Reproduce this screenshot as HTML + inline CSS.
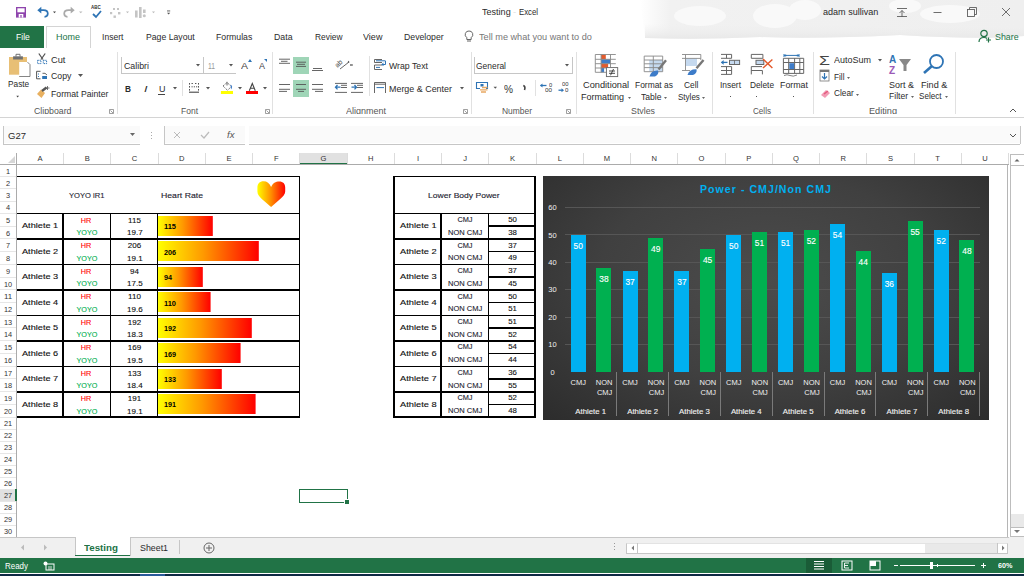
<!DOCTYPE html><html><head><meta charset="utf-8"><style>
*{margin:0;padding:0;box-sizing:border-box}
body{width:1024px;height:576px;overflow:hidden;background:#fff;position:relative;font-family:"Liberation Sans",sans-serif;color:#222}
.a{position:absolute}
.t{position:absolute;white-space:nowrap;line-height:1}
.k{-webkit-text-stroke:0.12px currentColor}
svg{position:absolute;overflow:visible}
</style></head><body>
<svg style="left:0;top:0" width="1024" height="48" viewBox="0 0 1024 48"><defs><linearGradient id="cg" x1="0" x2="1"><stop offset="0" stop-color="#fff"/><stop offset="0.08" stop-color="#f1f1f1"/><stop offset="1" stop-color="#efefef"/></linearGradient><linearGradient id="cg2" x1="0" x2="0" y1="0" y2="1"><stop offset="0" stop-color="#f0f0f0" stop-opacity="0"/><stop offset="1" stop-color="#e8e8e8"/></linearGradient></defs><path d="M640 0 H1024 V36 Q980 40 900 35 Q820 39 760 37 Q700 40 645 38 Z" fill="url(#cg)"/><path d="M645 24 Q700 22 760 27 Q840 22 900 30 Q960 24 1024 28 V36 Q980 40 900 35 Q820 39 760 37 Q700 40 645 38 Z" fill="url(#cg2)"/><g fill="#f9f9f9"><ellipse cx="700" cy="16" rx="26" ry="10"/><ellipse cx="775" cy="16" rx="22" ry="12"/><ellipse cx="805" cy="10" rx="16" ry="10"/><ellipse cx="950" cy="14" rx="30" ry="9"/><ellipse cx="905" cy="6" rx="16" ry="7"/></g></svg>
<svg style="left:0;top:0" width="100" height="26" viewBox="0 0 100 26"><rect x="16" y="7" width="10" height="10.6" fill="#8e44ad"/><rect x="17.4" y="8.3" width="7.2" height="4" fill="#fff"/><rect x="18.7" y="14" width="4.6" height="3.6" fill="#fff"/><rect x="20.4" y="15" width="1.2" height="2.6" fill="#8e44ad"/><path d="M40 10.2 H43.5 Q47.8 10.2 47.8 13.6 Q47.8 16.8 44.5 16.8" fill="none" stroke="#2e74b5" stroke-width="1.7"/><path d="M37.3 10.2 L41.3 6.8 V13.6Z" fill="#2e74b5"/><path d="M53 11.5 H56 L54.5 13.2Z" fill="#444"/><path d="M72 10.2 H68.5 Q64.2 10.2 64.2 13.6 Q64.2 16.8 67.5 16.8" fill="none" stroke="#aaa" stroke-width="1.7"/><path d="M74.7 10.2 L70.7 6.8 V13.6Z" fill="#aaa"/><path d="M79 11.5 H82.5 L80.75 13.2Z" fill="#bbb"/></svg>
<div class="t" id="t0" style="top:6.19px;font-size:4.5px;color:#333;font-weight:bold;left:91.00px;transform:scaleX(1.0000);transform-origin:0 0;">ABC</div>
<svg style="left:92px;top:10px" width="10" height="8" viewBox="0 0 10 8"><path d="M1 4 L4 7 L9 1" fill="none" stroke="#2e74b5" stroke-width="1.8"/></svg>
<svg style="left:0;top:0" width="200" height="26" viewBox="0 0 200 26"><g fill="#c4c4c4"><rect x="110" y="12" width="2.2" height="2.2"/><rect x="113" y="8" width="2" height="2"/><rect x="117" y="8" width="2" height="2"/><rect x="113.5" y="15.5" width="2.4" height="2.4"/><rect x="118" y="12" width="2.4" height="2.4"/></g><path d="M126 11.5h3l-1.5 1.7z" fill="#bbb"/><g fill="#c4c4c4"><rect x="135" y="10.5" width="2.6" height="7"/><rect x="139" y="7" width="2.6" height="11"/><rect x="143" y="9.5" width="2.6" height="3.5"/><circle cx="144.3" cy="15.8" r="1.5"/></g><path d="M152 11.5h3l-1.5 1.7z" fill="#bbb"/></svg>
<svg style="left:0;top:0" width="200" height="26" viewBox="0 0 200 26"><rect x="167" y="10.5" width="3.2" height="0.9" fill="#555"/><path d="M167 12.8h3.2l-1.6 1.8z" fill="#555"/></svg>
<div class="t" id="t1" style="top:6.94px;font-size:9.4px;color:#2b2b2b;font-weight:normal;left:482.00px;transform:scaleX(0.9662);transform-origin:0 0;">Testing</div>
<div class="t" id="t2" style="top:6.94px;font-size:9.4px;color:#e0e0e0;font-weight:normal;left:513.00px;transform:scaleX(1.0000);transform-origin:0 0;">-</div>
<div class="t" id="t3" style="top:6.94px;font-size:9.4px;color:#2b2b2b;font-weight:normal;left:519.40px;transform:scaleX(0.8327);transform-origin:0 0;">Excel</div>
<div class="t" id="t4" style="top:6.74px;font-size:9.4px;color:#2b2b2b;font-weight:normal;left:823.00px;transform:scaleX(0.9664);transform-origin:0 0;">adam sullivan</div>
<svg style="left:895px;top:5px" width="120" height="16" viewBox="0 0 120 16"><g stroke="#555" stroke-width="0.85" fill="none"><path d="M2 3.5 H12"/><path d="M7 12 V5.5 M4.5 8 L7 5.5 L9.5 8"/><path d="M2 11.5 H12"/><path d="M38.5 7.5 H46.5"/><rect x="72.5" y="4.5" width="7" height="7"/><path d="M74.5 4.5 V2.5 H81.5 V9.5 H79.5"/><path d="M107 3 L115 11 M115 3 L107 11"/></g></svg>
<div class="a" style="left:0.00px;top:26.00px;width:44.00px;height:21.50px;background:#217346;"></div>
<div class="t" id="t5" style="top:33.33px;font-size:9.3px;color:#fff;font-weight:normal;left:15.60px;transform:scaleX(0.9210);transform-origin:0 0;">File</div>
<div class="a" style="left:46.00px;top:26.00px;width:44.50px;height:22.00px;background:#fff;border:1px solid #d4d4d4;border-bottom:none"></div>
<div class="t" id="t6" style="top:32.63px;font-size:9.3px;color:#217346;font-weight:normal;left:56.00px;transform:scaleX(0.9673);transform-origin:0 0;">Home</div>
<div class="t" id="t7" style="top:32.63px;font-size:9.3px;color:#2b2b2b;font-weight:normal;left:102.30px;transform:scaleX(0.9198);transform-origin:0 0;">Insert</div>
<div class="t" id="t8" style="top:32.63px;font-size:9.3px;color:#2b2b2b;font-weight:normal;left:145.50px;transform:scaleX(0.9326);transform-origin:0 0;">Page Layout</div>
<div class="t" id="t9" style="top:32.63px;font-size:9.3px;color:#2b2b2b;font-weight:normal;left:216.30px;transform:scaleX(0.9368);transform-origin:0 0;">Formulas</div>
<div class="t" id="t10" style="top:32.63px;font-size:9.3px;color:#2b2b2b;font-weight:normal;left:274.20px;transform:scaleX(0.9419);transform-origin:0 0;">Data</div>
<div class="t" id="t11" style="top:32.63px;font-size:9.3px;color:#2b2b2b;font-weight:normal;left:314.70px;transform:scaleX(0.9021);transform-origin:0 0;">Review</div>
<div class="t" id="t12" style="top:32.63px;font-size:9.3px;color:#2b2b2b;font-weight:normal;left:363.40px;transform:scaleX(0.9708);transform-origin:0 0;">View</div>
<div class="t" id="t13" style="top:32.63px;font-size:9.3px;color:#2b2b2b;font-weight:normal;left:404.00px;transform:scaleX(0.9365);transform-origin:0 0;">Developer</div>
<svg style="left:464px;top:30px" width="10" height="13" viewBox="0 0 10 13"><path d="M5 1 A3.6 3.6 0 0 1 7.2 7.6 V9.5 H2.8 V7.6 A3.6 3.6 0 0 1 5 1Z" fill="none" stroke="#555" stroke-width="0.9"/><path d="M3 11 H7" stroke="#555" stroke-width="0.9"/></svg>
<div class="t" id="t14" style="top:32.63px;font-size:9.3px;color:#777;font-weight:normal;left:478.70px;transform:scaleX(0.9840);transform-origin:0 0;">Tell me what you want to do</div>
<svg style="left:978px;top:29px" width="14" height="14" viewBox="0 0 14 14"><circle cx="6" cy="4.5" r="3.2" fill="none" stroke="#217346" stroke-width="1.2"/><path d="M1 13 Q1 8.5 6 8.5 Q8 8.5 9 9.5" fill="none" stroke="#217346" stroke-width="1.2"/><path d="M10.5 8.5 V13.5 M8 11 H13" stroke="#217346" stroke-width="1.2"/></svg>
<div class="t" id="t15" style="top:33.43px;font-size:9.3px;color:#217346;font-weight:normal;left:994.80px;transform:scaleX(0.9511);transform-origin:0 0;">Share</div>
<div class="a" style="left:0.00px;top:117.00px;width:1024.00px;height:1.00px;background:#d4d4d4;"></div>
<div class="a" style="left:117.30px;top:51.50px;width:1.00px;height:62.50px;background:#e1e1e1;"></div>
<div class="a" style="left:272.20px;top:51.50px;width:1.00px;height:62.50px;background:#e1e1e1;"></div>
<div class="a" style="left:470.50px;top:51.50px;width:1.00px;height:62.50px;background:#e1e1e1;"></div>
<div class="a" style="left:576.00px;top:51.50px;width:1.00px;height:62.50px;background:#e1e1e1;"></div>
<div class="a" style="left:712.00px;top:51.50px;width:1.00px;height:62.50px;background:#e1e1e1;"></div>
<div class="a" style="left:813.00px;top:51.50px;width:1.00px;height:62.50px;background:#e1e1e1;"></div>
<div class="a" style="left:955.00px;top:51.50px;width:1.00px;height:62.50px;background:#e1e1e1;"></div>
<svg style="left:0;top:0" width="40" height="100" viewBox="0 0 40 100"><rect x="9" y="57" width="18" height="17.7" fill="#e8bf75"/><rect x="13.1" y="56.3" width="9.8" height="3.2" fill="#707070"/><path d="M16 56.5 V54.3 H20 V56.5" fill="none" stroke="#707070" stroke-width="1"/><path d="M19.2 62.1 H27.5 L30 64.6 V76.5 H19.2Z" fill="#fff"/><path d="M27.5 62.1 L30 64.6 V76.5 H19.2" fill="none" stroke="#666" stroke-width="0.8"/></svg>
<div class="t" id="t16" style="top:80.42px;font-size:8.6px;color:#2b2b2b;font-weight:normal;left:7.80px;transform:scaleX(0.9643);transform-origin:0 0;">Paste</div>
<svg style="left:0;top:0" width="40" height="100" viewBox="0 0 40 100"><path d="M16.3 95.8 H19 L17.65 97.6Z" fill="#444"/></svg>
<svg style="left:0;top:0" width="60" height="110" viewBox="0 0 60 110"><path d="M38.8 53.5 L43 59.5 M45.2 53.5 L41 59.5" fill="none" stroke="#555" stroke-width="1.3"/><g fill="none" stroke="#2e74b5" stroke-width="1" stroke-dasharray="1.2 0.8"><rect x="37.6" y="60.3" width="3.3" height="3.3"/><rect x="43.3" y="60.3" width="3.3" height="3.3"/></g><path d="M40.5 71.3 H36.6 V78.8 H40.5" fill="none" stroke="#555" stroke-width="1"/><path d="M38 74H39M38 76.5H39" stroke="#2e74b5" stroke-width="1"/><path d="M42.5 73.3 H45 L47 75" fill="none" stroke="#555" stroke-width="0.9"/><rect x="42.2" y="76" width="4.8" height="3" fill="#2e74b5"/><path d="M37 94 L41 89.5 L45 93 L41.5 98 Z" fill="#e8b060"/><path d="M42 91 L46.5 87.5" stroke="#555" stroke-width="2.4"/><path d="M47.5 86V90M45.5 88H49.5" stroke="#555" stroke-width="0.8"/></svg>
<div class="t" id="t17" style="top:56.02px;font-size:8.6px;color:#2b2b2b;font-weight:normal;left:50.60px;transform:scaleX(1.0766);transform-origin:0 0;">Cut</div>
<div class="t" id="t18" style="top:71.72px;font-size:8.6px;color:#2b2b2b;font-weight:normal;left:50.60px;transform:scaleX(1.0168);transform-origin:0 0;">Copy</div>
<svg style="left:78px;top:74px" width="5" height="3" viewBox="0 0 5 3"><path d="M0 0 H5 L2.5 3Z" fill="#555"/></svg>
<div class="t" id="t19" style="top:89.92px;font-size:8.6px;color:#2b2b2b;font-weight:normal;left:50.60px;transform:scaleX(1.0098);transform-origin:0 0;">Format Painter</div>
<div class="t" id="t20" style="top:106.92px;font-size:8.6px;color:#555;font-weight:normal;left:33.50px;transform:scaleX(1.0191);transform-origin:0 0;">Clipboard</div>
<svg style="left:109px;top:109px" width="5" height="5" viewBox="0 0 5 5"><path d="M0.5 0.5 H4.5 V4.5 H0.5Z M1.5 1.5 L4 4" fill="none" stroke="#777" stroke-width="0.7"/></svg>
<div class="a" style="left:121.00px;top:57.30px;width:1.00px;height:16.00px;background:#c6c6c6;"></div>
<div class="a" style="left:121.00px;top:72.50px;width:115.00px;height:1.00px;background:#c6c6c6;"></div>
<div class="a" style="left:203.00px;top:57.30px;width:1.00px;height:16.00px;background:#c6c6c6;"></div>
<div class="t" id="t21" style="top:61.92px;font-size:8.6px;color:#2b2b2b;font-weight:normal;left:124.00px;transform:scaleX(1.0263);transform-origin:0 0;">Calibri</div>
<div class="t" id="t22" style="top:61.92px;font-size:8.6px;color:#999;font-weight:normal;left:208.00px;transform:scaleX(0.7846);transform-origin:0 0;">11</div>
<svg style="left:196px;top:64px" width="4" height="3" viewBox="0 0 4 3"><path d="M0 0 H4 L2 2.5Z" fill="#555"/></svg>
<svg style="left:229px;top:64px" width="4" height="3" viewBox="0 0 4 3"><path d="M0 0 H4 L2 2.5Z" fill="#555"/></svg>
<div class="t" id="t23" style="top:61.46px;font-size:9.5px;color:#444;font-weight:normal;left:241.00px;transform:scaleX(1.1034);transform-origin:0 0;">A</div>
<svg style="left:248px;top:59px" width="4" height="3" viewBox="0 0 4 3"><path d="M0 3 H4 L2 0Z" fill="#2e74b5"/></svg>
<div class="t" id="t24" style="top:62.30px;font-size:8.5px;color:#444;font-weight:normal;left:259.00px;transform:scaleX(1.0579);transform-origin:0 0;">A</div>
<svg style="left:264px;top:59px" width="4" height="3" viewBox="0 0 4 3"><path d="M0 0 L3 0 L3 3Z" fill="#2e74b5"/></svg>
<div class="t" id="t25" style="top:85.02px;font-size:8.6px;color:#2b2b2b;font-weight:bold;left:125.00px;transform:scaleX(0.9648);transform-origin:0 0;">B</div>
<div class="t" id="t26" style="top:85.02px;font-size:8.6px;color:#2b2b2b;font-weight:normal;left:143.50px;transform:scaleX(1.4641);transform-origin:0 0;font-style:italic;">I</div>
<div class="t" id="t27" style="top:85.02px;font-size:8.6px;color:#2b2b2b;font-weight:normal;left:158.50px;transform:scaleX(1.0452);transform-origin:0 0;">U</div>
<div class="a" style="left:158.00px;top:94.00px;width:7.00px;height:0.80px;background:#444;"></div>
<div class="a" style="left:182.00px;top:80.00px;width:1.00px;height:16.00px;background:#e1e1e1;"></div>
<svg style="left:0;top:0" width="1024" height="120" viewBox="0 0 1024 120"><g fill="#555"><rect x="189" y="83" width="1" height="1.6"/><rect x="189" y="86" width="1" height="1.6"/><rect x="189" y="89" width="1" height="1.6"/><rect x="198" y="83" width="1" height="1.6"/><rect x="198" y="86" width="1" height="1.6"/><rect x="198" y="89" width="1" height="1.6"/><rect x="191.5" y="83" width="1.4" height="1"/><rect x="195" y="83" width="1.4" height="1"/><rect x="191.5" y="86.3" width="1.2" height="1"/><rect x="193.8" y="86.3" width="1.2" height="1"/><rect x="196" y="86.3" width="1.2" height="1"/></g><path d="M189 92.2H199" stroke="#444" stroke-width="1.1"/><path d="M223 86 L227 82.5 L231.5 86.5 L227.5 90.3Z" fill="none" stroke="#666" stroke-width="0.9" stroke-dasharray="1.4 0.8"/><path d="M227 81.8 V85.5" stroke="#555" stroke-width="0.9"/><path d="M230.5 84.5 Q233.5 86.5 231 89.5Z" fill="#3d7cc9"/><rect x="220.9" y="91" width="12.1" height="3" fill="#ffff00"/><path d="M249.3 90.8 L252.3 83.5 L255.3 90.8 M250.3 88.3H254.3" fill="none" stroke="#444" stroke-width="1.1"/><rect x="246" y="91" width="12" height="3" fill="#ff0000"/></svg>
<svg style="left:172.5px;top:87px" width="4" height="3" viewBox="0 0 4 3"><path d="M0 0 H4 L2 2.5Z" fill="#555"/></svg>
<svg style="left:205.5px;top:87px" width="4" height="3" viewBox="0 0 4 3"><path d="M0 0 H4 L2 2.5Z" fill="#555"/></svg>
<svg style="left:237.5px;top:87px" width="4" height="3" viewBox="0 0 4 3"><path d="M0 0 H4 L2 2.5Z" fill="#555"/></svg>
<svg style="left:262.5px;top:87px" width="4" height="3" viewBox="0 0 4 3"><path d="M0 0 H4 L2 2.5Z" fill="#555"/></svg>
<div class="t" id="t28" style="top:106.92px;font-size:8.6px;color:#555;font-weight:normal;left:181.00px;transform:scaleX(0.9882);transform-origin:0 0;">Font</div>
<svg style="left:265px;top:109px" width="5" height="5" viewBox="0 0 5 5"><path d="M0.5 0.5 H4.5 V4.5 H0.5Z M1.5 1.5 L4 4" fill="none" stroke="#777" stroke-width="0.7"/></svg>
<div class="a" style="left:293.10px;top:57.10px;width:15.80px;height:16.70px;background:#9fd5b7;"></div>
<div class="a" style="left:293.10px;top:80.00px;width:15.80px;height:17.00px;background:#9fd5b7;"></div>
<svg style="left:0;top:0" width="1024" height="120" viewBox="0 0 1024 120"><g stroke="#555" stroke-width="0.9" fill="none"><path d="M279 59.2H290M281 61.3H287.5M279 63.3H290"/><path d="M296 62.2H306M297 64.3H305M296 66.4H306"/><path d="M313 68.5H322M312 70.5H323"/><path d="M279 84.5H290M279 89.3H290M279 91.4H287"/><path d="M296 84.5H306M296 89.3H306M298 91.4H304"/><path d="M312 84.5H323M312 89.3H323M315 91.4H323"/><path d="M335 83.4H347M341 85.3H347M341 87.5H347M335 92.4H347"/><path d="M351 83.4H363M357 85.3H363M357 87.5H363M351 92.4H363"/><path d="M340 69 L349 62 M348 61 l1.2 1 l-1.5 0.3"/></g><text x="0" y="0" transform="translate(337.5 68) rotate(-45)" font-family="Liberation Sans" font-size="7" fill="#444">ab</text><g stroke="#2e74b5" stroke-width="1.3" fill="none"><path d="M335.5 87.2H340.5M337.5 85 L335.5 87.2 L337.5 89.4"/><path d="M351.5 87.2H356.5M354.5 85 L356.5 87.2 L354.5 89.4"/></g><path d="M350 65 H352.8" stroke="#555" stroke-width="1.3"/></svg>
<div class="a" style="left:368.50px;top:56.00px;width:1.00px;height:40.00px;background:#e1e1e1;"></div>
<svg style="left:0;top:0" width="1024" height="120" viewBox="0 0 1024 120"><g fill="none" stroke="#555" stroke-width="0.9"><path d="M382 59.5H374.5V62.5H382M382 65H374.5V69.5H382"/><path d="M374.5 93V82.5H385.5V93M374.5 84.2H385.5"/></g><g fill="none" stroke="#2e74b5" stroke-width="1"><path d="M376 60.8H385.5M376 67.4H380M385.5 61 V64.5 H382 M383.5 62.8 L382 64.5 L383.5 66"/><path d="M376.5 87.6H384"/></g></svg>
<div class="t" id="t29" style="top:61.92px;font-size:8.6px;color:#2b2b2b;font-weight:normal;left:389.00px;transform:scaleX(1.0163);transform-origin:0 0;">Wrap Text</div>
<div class="t" id="t30" style="top:84.92px;font-size:8.6px;color:#2b2b2b;font-weight:normal;left:389.00px;transform:scaleX(1.0384);transform-origin:0 0;">Merge &amp; Center</div>
<svg style="left:460px;top:87px" width="4" height="3" viewBox="0 0 4 3"><path d="M0 0 H4 L2 2.5Z" fill="#555"/></svg>
<div class="t" id="t31" style="top:106.92px;font-size:8.6px;color:#555;font-weight:normal;left:346.00px;transform:scaleX(1.0466);transform-origin:0 0;">Alignment</div>
<svg style="left:463px;top:109px" width="5" height="5" viewBox="0 0 5 5"><path d="M0.5 0.5 H4.5 V4.5 H0.5Z M1.5 1.5 L4 4" fill="none" stroke="#777" stroke-width="0.7"/></svg>
<div class="a" style="left:474.00px;top:57.20px;width:1.00px;height:16.00px;background:#c6c6c6;"></div>
<div class="a" style="left:474.00px;top:72.50px;width:98.50px;height:1.00px;background:#c6c6c6;"></div>
<div class="a" style="left:572.00px;top:57.20px;width:1.00px;height:16.00px;background:#c6c6c6;"></div>
<div class="t" id="t32" style="top:61.92px;font-size:8.6px;color:#2b2b2b;font-weight:normal;left:476.00px;transform:scaleX(0.9811);transform-origin:0 0;">General</div>
<svg style="left:565px;top:64px" width="4" height="3" viewBox="0 0 4 3"><path d="M0 0 H4 L2 2.5Z" fill="#555"/></svg>
<svg style="left:0;top:0" width="1024" height="120" viewBox="0 0 1024 120"><path d="M478 82.5 H476.5 V88.5 H478 M486 82.5 H487.5 V88.5 H486" fill="none" stroke="#2e74b5" stroke-width="1.1"/><path d="M478 82.5H486M478 88.5H480" stroke="#2e74b5" stroke-width="1.1"/><rect x="480.5" y="84" width="3" height="2.5" fill="#2e74b5"/><path d="M482 87.5H487.5M480 89.8H487.5M481 92H486" stroke="#e8a862" stroke-width="1.3"/><path d="M493.5 86.8H497L495.25 88.8Z" fill="#555"/><path d="M523.3 85.5 Q525.8 86.5 524.5 90" fill="none" stroke="#444" stroke-width="1.6"/><path d="M540.5 85.5H546.5" stroke="#2e74b5" stroke-width="1.3"/><path d="M540 85.5L542.5 83.5V87.5Z" fill="#2e74b5"/><path d="M558.5 90.2H562.5" stroke="#2e74b5" stroke-width="1.3"/><path d="M564 90.2L561.5 88.2V92.2Z" fill="#2e74b5"/></svg>
<div class="t" id="t33" style="top:83.71px;font-size:10.5px;color:#333;font-weight:normal;left:503.70px;transform:scaleX(0.9632);transform-origin:0 0;">%</div>
<div class="a" style="left:535.40px;top:80.00px;width:1.00px;height:16.00px;background:#e1e1e1;"></div>
<div class="t" id="t34" style="top:83.46px;font-size:5.6px;color:#333;font-weight:normal;left:548.60px;transform:scaleX(1.0240);transform-origin:0 0;">0</div>
<div class="t" id="t35" style="top:87.96px;font-size:5.6px;color:#333;font-weight:normal;left:545.00px;transform:scaleX(1.1228);transform-origin:0 0;">00</div>
<div class="t" id="t36" style="top:82.46px;font-size:5.6px;color:#333;font-weight:normal;left:561.80px;transform:scaleX(1.0426);transform-origin:0 0;">00</div>
<div class="t" id="t37" style="top:87.76px;font-size:5.6px;color:#333;font-weight:normal;left:564.50px;transform:scaleX(1.0880);transform-origin:0 0;">0</div>
<div class="t" id="t38" style="top:106.92px;font-size:8.6px;color:#555;font-weight:normal;left:502.00px;transform:scaleX(0.9811);transform-origin:0 0;">Number</div>
<svg style="left:566px;top:109px" width="5" height="5" viewBox="0 0 5 5"><path d="M0.5 0.5 H4.5 V4.5 H0.5Z M1.5 1.5 L4 4" fill="none" stroke="#777" stroke-width="0.7"/></svg>
<svg style="left:0;top:0" width="1024" height="120" viewBox="0 0 1024 120"><rect x="601.1" y="54.5" width="4.7" height="4.7" fill="#e35b2e"/><rect x="601.1" y="59.3" width="9" height="4.4" fill="#3d7cc9"/><rect x="601.1" y="63.7" width="7" height="4.3" fill="#e35b2e"/><rect x="601.1" y="68" width="3" height="4.3" fill="#3d7cc9"/><g fill="none" stroke="#888" stroke-width="0.9"><path d="M615.8 54.5H595.3V72.3H606M595.3 59.3H615.8M595.3 63.7H615.8M595.3 68H606M601.1 54.5V72.3M610.5 54.5V67"/></g><rect x="606.4" y="67.6" width="11.3" height="9" fill="#fff" stroke="#666" stroke-width="0.9"/><path d="M609 71H615M609 73.3H615M613.5 69L610.5 75.3" stroke="#333" stroke-width="0.9"/><rect x="649.2" y="60" width="13.5" height="11.7" fill="#c5d9ef"/><g fill="none" stroke="#888" stroke-width="0.9"><path d="M644.2 56.1H662.7V71.7H644.2ZM653.3 56.1V71.7M644.2 60H662.7M644.2 63.8H662.7M644.2 67.6H662.7"/></g><path d="M666 60.3 L658.5 69.5" stroke="#777" stroke-width="2.4"/><path d="M649.5 76.5 Q651 70 658 70.5 Q659.5 74 655 76.5Z" fill="#3d7cc9"/><rect x="685.5" y="58.4" width="11.5" height="7.6" fill="#c5d9ef"/><g fill="none" stroke="#888" stroke-width="0.9"><path d="M682 54.5H700.8M682 58.4H700.8M685.5 54.5V70.5M682 70.5H690M700.8 54.5V60"/></g><path d="M703.5 60 L696.5 68.3" stroke="#777" stroke-width="2.4"/><path d="M687.5 75 Q689 69 696.5 69.2 Q697.5 73 693 75Z" fill="#3d7cc9"/></svg>
<div class="t" id="t39" style="top:80.72px;font-size:8.6px;color:#2b2b2b;font-weight:normal;left:582.90px;transform:scaleX(1.0721);transform-origin:0 0;">Conditional</div>
<div class="t" id="t40" style="top:92.62px;font-size:8.6px;color:#2b2b2b;font-weight:normal;left:581.20px;transform:scaleX(1.0468);transform-origin:0 0;">Formatting</div>
<svg style="left:627.5px;top:96.5px" width="3" height="2" viewBox="0 0 3 2"><path d="M0 0 H3 L1.5 2Z" fill="#666"/></svg>
<div class="t" id="t41" style="top:80.72px;font-size:8.6px;color:#2b2b2b;font-weight:normal;left:634.90px;transform:scaleX(0.9796);transform-origin:0 0;">Format as</div>
<div class="t" id="t42" style="top:92.62px;font-size:8.6px;color:#2b2b2b;font-weight:normal;left:640.70px;transform:scaleX(0.9977);transform-origin:0 0;">Table</div>
<svg style="left:664px;top:96.5px" width="3" height="2" viewBox="0 0 3 2"><path d="M0 0 H3 L1.5 2Z" fill="#666"/></svg>
<div class="t" id="t43" style="top:80.72px;font-size:8.6px;color:#2b2b2b;font-weight:normal;left:684.40px;transform:scaleX(0.9722);transform-origin:0 0;">Cell</div>
<div class="t" id="t44" style="top:92.62px;font-size:8.6px;color:#2b2b2b;font-weight:normal;left:677.60px;transform:scaleX(0.9356);transform-origin:0 0;">Styles</div>
<svg style="left:702.3px;top:96.5px" width="3" height="2" viewBox="0 0 3 2"><path d="M0 0 H3 L1.5 2Z" fill="#666"/></svg>
<div class="t" id="t45" style="top:106.92px;font-size:8.6px;color:#555;font-weight:normal;left:631.00px;transform:scaleX(1.0254);transform-origin:0 0;">Styles</div>
<svg style="left:0;top:0" width="1024" height="120" viewBox="0 0 1024 120"><g fill="none" stroke="#666" stroke-width="1"><path d="M721 54.4H731.6V58.3H721M726.5 54.4V58.3"/><path d="M721 66.6H731.6M721 70.5H731.6M721 74.4H731.6M726.5 66.6V74.4M731.6 66.6V74.4"/><path d="M751.3 54.4H762.9V58.3H751.3Z"/><path d="M751.3 66.6H762M751.3 70.5H762.4M751.3 66.6V74.4M762.4 70.5V74.4"/><path d="M783.4 58.3H803.7V73.4H783.4ZM788.7 58.3V73.4M794.6 58.3V73.4M799.8 58.3V73.4M783.4 62.5H803.7M783.4 69.5H803.7"/><path d="M784 75.5 Q787 74 790 75.5 Q793 77 797 75" stroke-width="0.8"/></g><rect x="729.5" y="60.3" width="10.1" height="4.2" fill="#c5d9ef" stroke="#666" stroke-width="1"/><path d="M734.5 60.3V64.5" stroke="#666" stroke-width="0.8"/><path d="M721.5 62.4H727.5" stroke="#2e74b5" stroke-width="1.3"/><path d="M720.8 62.4L723.6 60V64.8Z" fill="#2e74b5"/><rect x="756" y="60.3" width="7.8" height="4.2" fill="#c5d9ef" stroke="#666" stroke-width="1"/><path d="M763 59 L772.4 68 M772.4 59.5 L763 68" stroke="#e35b2e" stroke-width="1.5"/><rect x="789.3" y="63.2" width="4.8" height="5.8" fill="#3d7cc9"/><path d="M784 55.4H799M784 54V57M799 54V57" stroke="#2e74b5" stroke-width="1"/><circle cx="785.5" cy="55.4" r="1" fill="#2e74b5"/><circle cx="797.5" cy="55.4" r="1" fill="#2e74b5"/></svg>
<div class="t" id="t46" style="top:80.72px;font-size:8.6px;color:#2b2b2b;font-weight:normal;left:720.00px;transform:scaleX(0.9767);transform-origin:0 0;">Insert</div>
<div class="t" id="t47" style="top:80.72px;font-size:8.6px;color:#2b2b2b;font-weight:normal;left:750.00px;transform:scaleX(0.9660);transform-origin:0 0;">Delete</div>
<div class="t" id="t48" style="top:80.72px;font-size:8.6px;color:#2b2b2b;font-weight:normal;left:780.00px;transform:scaleX(1.0287);transform-origin:0 0;">Format</div>
<div class="a" style="left:729.50px;top:96.00px;width:1.20px;height:1.20px;background:#555;"></div>
<div class="a" style="left:756.00px;top:96.00px;width:1.20px;height:1.20px;background:#555;"></div>
<div class="a" style="left:793.00px;top:96.00px;width:1.20px;height:1.20px;background:#555;"></div>
<div class="t" id="t49" style="top:106.92px;font-size:8.6px;color:#555;font-weight:normal;left:753.00px;transform:scaleX(0.9419);transform-origin:0 0;">Cells</div>
<div class="t" id="t50" style="top:53.50px;font-size:13px;color:#444;font-weight:normal;left:819.00px;transform:scaleX(1.3670);transform-origin:0 0;">&Sigma;</div>
<div class="t" id="t51" style="top:55.92px;font-size:8.6px;color:#2b2b2b;font-weight:normal;left:833.50px;transform:scaleX(1.0436);transform-origin:0 0;">AutoSum</div>
<svg style="left:878px;top:59px" width="4" height="3" viewBox="0 0 4 3"><path d="M0 0 H4 L2 2.5Z" fill="#555"/></svg>
<svg style="left:819px;top:69px" width="12" height="13" viewBox="0 0 12 13"><rect x="1" y="1" width="9" height="11" fill="none" stroke="#777" stroke-width="0.8"/><rect x="1" y="1" width="9" height="2" fill="#777"/><path d="M5.5 4V10M3 7.5L5.5 10L8 7.5" fill="none" stroke="#2e74b5" stroke-width="1.2"/></svg>
<div class="t" id="t52" style="top:72.52px;font-size:8.6px;color:#2b2b2b;font-weight:normal;left:833.90px;transform:scaleX(0.9559);transform-origin:0 0;">Fill</div>
<svg style="left:847px;top:76.5px" width="3" height="2" viewBox="0 0 3 2"><path d="M0 0 H3 L1.5 2Z" fill="#666"/></svg>
<svg style="left:820px;top:88px" width="11" height="10" viewBox="0 0 11 10"><path d="M1 7 L6 2 L10 5 L5 10Z" fill="#f29bb4"/><path d="M4 6 L8 3" stroke="#e35b7e" stroke-width="1.5"/></svg>
<div class="t" id="t53" style="top:89.22px;font-size:8.6px;color:#2b2b2b;font-weight:normal;left:833.50px;transform:scaleX(0.9637);transform-origin:0 0;">Clear</div>
<svg style="left:856px;top:93.5px" width="3" height="2" viewBox="0 0 3 2"><path d="M0 0 H3 L1.5 2Z" fill="#666"/></svg>
<svg style="left:889px;top:54px" width="26" height="22" viewBox="0 0 26 22"><text x="0" y="9" font-family="Liberation Sans" font-size="10" fill="#2e74b5" font-weight="bold">A</text><text x="0" y="20" font-family="Liberation Sans" font-size="10" fill="#9b59b6" font-weight="bold">Z</text><path d="M10 5 H22 L17.5 11 V17 H14.5 V11Z" fill="#888"/></svg>
<div class="t" id="t54" style="top:80.52px;font-size:8.6px;color:#2b2b2b;font-weight:normal;left:888.90px;transform:scaleX(1.0422);transform-origin:0 0;">Sort &amp;</div>
<div class="t" id="t55" style="top:92.32px;font-size:8.6px;color:#2b2b2b;font-weight:normal;left:888.90px;transform:scaleX(0.9995);transform-origin:0 0;">Filter</div>
<svg style="left:911px;top:96.3px" width="3" height="2" viewBox="0 0 3 2"><path d="M0 0 H3 L1.5 2Z" fill="#666"/></svg>
<svg style="left:922px;top:53px" width="24" height="22" viewBox="0 0 24 22"><circle cx="14.5" cy="8.5" r="6.5" fill="none" stroke="#2e74b5" stroke-width="1.8"/><path d="M10 13 L2 20" stroke="#2e74b5" stroke-width="2.6"/></svg>
<div class="t" id="t56" style="top:80.52px;font-size:8.6px;color:#2b2b2b;font-weight:normal;left:920.60px;transform:scaleX(1.0626);transform-origin:0 0;">Find &amp;</div>
<div class="t" id="t57" style="top:92.32px;font-size:8.6px;color:#2b2b2b;font-weight:normal;left:919.00px;transform:scaleX(0.9418);transform-origin:0 0;">Select</div>
<svg style="left:945px;top:96.3px" width="3" height="2" viewBox="0 0 3 2"><path d="M0 0 H3 L1.5 2Z" fill="#666"/></svg>
<div class="t" id="t58" style="top:106.92px;font-size:8.6px;color:#555;font-weight:normal;left:869.00px;transform:scaleX(1.0654);transform-origin:0 0;">Editing</div>
<svg style="left:1009px;top:108px" width="8" height="5" viewBox="0 0 8 5"><path d="M1 4 L4 1 L7 4" fill="none" stroke="#555" stroke-width="1"/></svg>
<div class="a" style="left:0.00px;top:114.40px;width:1024.00px;height:2.60px;background:#fff;"></div>
<div class="a" style="left:4.00px;top:126.20px;width:136.00px;height:17.30px;background:#fafafa;"></div>
<div class="a" style="left:164.50px;top:126.20px;width:80.00px;height:17.30px;background:#fafafa;"></div>
<div class="a" style="left:249.00px;top:126.20px;width:770.50px;height:17.30px;background:#fafafa;"></div>
<div class="a" style="left:3.00px;top:126.20px;width:1.00px;height:18.00px;background:#c6c6c6;"></div>
<div class="a" style="left:3.00px;top:143.50px;width:137.00px;height:1.00px;background:#c6c6c6;"></div>
<div class="t" id="t59" style="top:131.72px;font-size:8.6px;color:#2b2b2b;font-weight:normal;left:8.00px;transform:scaleX(1.1077);transform-origin:0 0;">G27</div>
<svg style="left:130px;top:133px" width="5" height="3" viewBox="0 0 5 3"><path d="M0 0 H5 L2.5 3Z" fill="#666"/></svg>
<div class="a" style="left:151.00px;top:132.00px;width:1.00px;height:1.00px;background:#aaa;"></div>
<div class="a" style="left:151.00px;top:135.00px;width:1.00px;height:1.00px;background:#aaa;"></div>
<div class="a" style="left:151.00px;top:138.00px;width:1.00px;height:1.00px;background:#aaa;"></div>
<div class="a" style="left:163.50px;top:126.20px;width:1.00px;height:18.00px;background:#c6c6c6;"></div>
<div class="a" style="left:163.50px;top:143.50px;width:81.00px;height:1.00px;background:#c6c6c6;"></div>
<svg style="left:173px;top:131px" width="64" height="10" viewBox="0 0 64 10"><path d="M1 1 L7 7 M7 1 L1 7" stroke="#bbb" stroke-width="1"/><path d="M28 4 L31 7 L36 1" fill="none" stroke="#bbb" stroke-width="1.2"/></svg>
<div class="t" id="t60" style="top:131.38px;font-size:9px;color:#555;font-weight:normal;left:227.00px;transform:scaleX(1.0690);transform-origin:0 0;font-family:"Liberation Serif",serif;"><i>fx</i></div>
<div class="a" style="left:248.50px;top:143.50px;width:771.00px;height:1.00px;background:#c6c6c6;"></div>
<div class="a" style="left:1019.50px;top:126.20px;width:1.00px;height:18.00px;background:#c6c6c6;"></div>
<svg style="left:1009px;top:133px" width="8" height="5" viewBox="0 0 8 5"><path d="M1 1 L4 4 L7 1" fill="none" stroke="#555" stroke-width="1"/></svg>
<div class="a" style="left:299.94px;top:153.00px;width:47.24px;height:11.50px;background:#e1e1e1;"></div>
<div class="a" style="left:63.24px;top:153.00px;width:1.00px;height:11.50px;background:#dcdcdc;"></div>
<div class="t" style="top:155.17px;font-size:7.6px;color:#333;font-weight:normal;left:40.12px;"><span id="t61" style="display:inline-block;transform:scaleX(1.0000) translateX(-50%);transform-origin:0 0">A</span></div>
<div class="a" style="left:110.48px;top:153.00px;width:1.00px;height:11.50px;background:#dcdcdc;"></div>
<div class="t" style="top:155.17px;font-size:7.6px;color:#333;font-weight:normal;left:87.36px;"><span id="t62" style="display:inline-block;transform:scaleX(1.0000) translateX(-50%);transform-origin:0 0">B</span></div>
<div class="a" style="left:157.72px;top:153.00px;width:1.00px;height:11.50px;background:#dcdcdc;"></div>
<div class="t" style="top:155.17px;font-size:7.6px;color:#333;font-weight:normal;left:134.60px;"><span id="t63" style="display:inline-block;transform:scaleX(1.0000) translateX(-50%);transform-origin:0 0">C</span></div>
<div class="a" style="left:204.96px;top:153.00px;width:1.00px;height:11.50px;background:#dcdcdc;"></div>
<div class="t" style="top:155.17px;font-size:7.6px;color:#333;font-weight:normal;left:181.84px;"><span id="t64" style="display:inline-block;transform:scaleX(1.0000) translateX(-50%);transform-origin:0 0">D</span></div>
<div class="a" style="left:252.20px;top:153.00px;width:1.00px;height:11.50px;background:#dcdcdc;"></div>
<div class="t" style="top:155.17px;font-size:7.6px;color:#333;font-weight:normal;left:229.08px;"><span id="t65" style="display:inline-block;transform:scaleX(1.0000) translateX(-50%);transform-origin:0 0">E</span></div>
<div class="a" style="left:299.44px;top:153.00px;width:1.00px;height:11.50px;background:#dcdcdc;"></div>
<div class="t" style="top:155.17px;font-size:7.6px;color:#333;font-weight:normal;left:276.32px;"><span id="t66" style="display:inline-block;transform:scaleX(1.0000) translateX(-50%);transform-origin:0 0">F</span></div>
<div class="a" style="left:346.68px;top:153.00px;width:1.00px;height:11.50px;background:#dcdcdc;"></div>
<div class="t" style="top:155.17px;font-size:7.6px;color:#333;font-weight:normal;left:323.56px;"><span id="t67" style="display:inline-block;transform:scaleX(1.0000) translateX(-50%);transform-origin:0 0">G</span></div>
<div class="a" style="left:393.92px;top:153.00px;width:1.00px;height:11.50px;background:#dcdcdc;"></div>
<div class="t" style="top:155.17px;font-size:7.6px;color:#333;font-weight:normal;left:370.80px;"><span id="t68" style="display:inline-block;transform:scaleX(1.0000) translateX(-50%);transform-origin:0 0">H</span></div>
<div class="a" style="left:441.16px;top:153.00px;width:1.00px;height:11.50px;background:#dcdcdc;"></div>
<div class="t" style="top:155.17px;font-size:7.6px;color:#333;font-weight:normal;left:418.04px;"><span id="t69" style="display:inline-block;transform:scaleX(1.0000) translateX(-50%);transform-origin:0 0">I</span></div>
<div class="a" style="left:488.40px;top:153.00px;width:1.00px;height:11.50px;background:#dcdcdc;"></div>
<div class="t" style="top:155.17px;font-size:7.6px;color:#333;font-weight:normal;left:465.28px;"><span id="t70" style="display:inline-block;transform:scaleX(1.0000) translateX(-50%);transform-origin:0 0">J</span></div>
<div class="a" style="left:535.64px;top:153.00px;width:1.00px;height:11.50px;background:#dcdcdc;"></div>
<div class="t" style="top:155.17px;font-size:7.6px;color:#333;font-weight:normal;left:512.52px;"><span id="t71" style="display:inline-block;transform:scaleX(1.0000) translateX(-50%);transform-origin:0 0">K</span></div>
<div class="a" style="left:582.88px;top:153.00px;width:1.00px;height:11.50px;background:#dcdcdc;"></div>
<div class="t" style="top:155.17px;font-size:7.6px;color:#333;font-weight:normal;left:559.76px;"><span id="t72" style="display:inline-block;transform:scaleX(1.0000) translateX(-50%);transform-origin:0 0">L</span></div>
<div class="a" style="left:630.12px;top:153.00px;width:1.00px;height:11.50px;background:#dcdcdc;"></div>
<div class="t" style="top:155.17px;font-size:7.6px;color:#333;font-weight:normal;left:607.00px;"><span id="t73" style="display:inline-block;transform:scaleX(1.0000) translateX(-50%);transform-origin:0 0">M</span></div>
<div class="a" style="left:677.36px;top:153.00px;width:1.00px;height:11.50px;background:#dcdcdc;"></div>
<div class="t" style="top:155.17px;font-size:7.6px;color:#333;font-weight:normal;left:654.24px;"><span id="t74" style="display:inline-block;transform:scaleX(1.0000) translateX(-50%);transform-origin:0 0">N</span></div>
<div class="a" style="left:724.60px;top:153.00px;width:1.00px;height:11.50px;background:#dcdcdc;"></div>
<div class="t" style="top:155.17px;font-size:7.6px;color:#333;font-weight:normal;left:701.48px;"><span id="t75" style="display:inline-block;transform:scaleX(1.0000) translateX(-50%);transform-origin:0 0">O</span></div>
<div class="a" style="left:771.84px;top:153.00px;width:1.00px;height:11.50px;background:#dcdcdc;"></div>
<div class="t" style="top:155.17px;font-size:7.6px;color:#333;font-weight:normal;left:748.72px;"><span id="t76" style="display:inline-block;transform:scaleX(1.0000) translateX(-50%);transform-origin:0 0">P</span></div>
<div class="a" style="left:819.08px;top:153.00px;width:1.00px;height:11.50px;background:#dcdcdc;"></div>
<div class="t" style="top:155.17px;font-size:7.6px;color:#333;font-weight:normal;left:795.96px;"><span id="t77" style="display:inline-block;transform:scaleX(1.0000) translateX(-50%);transform-origin:0 0">Q</span></div>
<div class="a" style="left:866.32px;top:153.00px;width:1.00px;height:11.50px;background:#dcdcdc;"></div>
<div class="t" style="top:155.17px;font-size:7.6px;color:#333;font-weight:normal;left:843.20px;"><span id="t78" style="display:inline-block;transform:scaleX(1.0000) translateX(-50%);transform-origin:0 0">R</span></div>
<div class="a" style="left:913.56px;top:153.00px;width:1.00px;height:11.50px;background:#dcdcdc;"></div>
<div class="t" style="top:155.17px;font-size:7.6px;color:#333;font-weight:normal;left:890.44px;"><span id="t79" style="display:inline-block;transform:scaleX(1.0000) translateX(-50%);transform-origin:0 0">S</span></div>
<div class="a" style="left:960.80px;top:153.00px;width:1.00px;height:11.50px;background:#dcdcdc;"></div>
<div class="t" style="top:155.17px;font-size:7.6px;color:#333;font-weight:normal;left:937.68px;"><span id="t80" style="display:inline-block;transform:scaleX(1.0000) translateX(-50%);transform-origin:0 0">T</span></div>
<div class="a" style="left:1008.04px;top:153.00px;width:1.00px;height:11.50px;background:#dcdcdc;"></div>
<div class="t" style="top:155.17px;font-size:7.6px;color:#333;font-weight:normal;left:984.92px;"><span id="t81" style="display:inline-block;transform:scaleX(1.0000) translateX(-50%);transform-origin:0 0">U</span></div>
<div class="a" style="left:299.94px;top:162.70px;width:47.24px;height:2.00px;background:#217346;"></div>
<div class="a" style="left:0.00px;top:164.20px;width:1009.00px;height:1.00px;background:#ababab;"></div>
<svg style="left:8px;top:156px" width="7" height="7" viewBox="0 0 7 7"><path d="M7 0 V7 H0Z" fill="#d6d6d6"/></svg>
<div class="a" style="left:16.00px;top:153.00px;width:1.00px;height:384.50px;background:#ababab;"></div>
<div class="a" style="left:0.00px;top:489.14px;width:16.00px;height:12.00px;background:#e1e1e1;"></div>
<div class="a" style="left:0.00px;top:176.20px;width:16.00px;height:1.00px;background:#e6e6e6;"></div>
<div class="t" style="top:167.63px;font-size:7.6px;color:#333;font-weight:normal;left:8.00px;"><span id="t82" style="display:inline-block;transform:scaleX(0.9683) translateX(-50%);transform-origin:0 0">1</span></div>
<div class="a" style="left:0.00px;top:188.40px;width:16.00px;height:1.00px;background:#e6e6e6;"></div>
<div class="t" style="top:179.78px;font-size:7.6px;color:#333;font-weight:normal;left:8.00px;"><span id="t83" style="display:inline-block;transform:scaleX(0.9683) translateX(-50%);transform-origin:0 0">2</span></div>
<div class="a" style="left:0.00px;top:200.60px;width:16.00px;height:1.00px;background:#e6e6e6;"></div>
<div class="t" style="top:191.98px;font-size:7.6px;color:#333;font-weight:normal;left:8.00px;"><span id="t84" style="display:inline-block;transform:scaleX(0.9683) translateX(-50%);transform-origin:0 0">3</span></div>
<div class="a" style="left:0.00px;top:212.80px;width:16.00px;height:1.00px;background:#e6e6e6;"></div>
<div class="t" style="top:204.18px;font-size:7.6px;color:#333;font-weight:normal;left:8.00px;"><span id="t85" style="display:inline-block;transform:scaleX(0.9683) translateX(-50%);transform-origin:0 0">4</span></div>
<div class="a" style="left:0.00px;top:225.54px;width:16.00px;height:1.00px;background:#e6e6e6;"></div>
<div class="t" style="top:216.80px;font-size:7.6px;color:#333;font-weight:normal;left:8.00px;"><span id="t86" style="display:inline-block;transform:scaleX(0.9683) translateX(-50%);transform-origin:0 0">5</span></div>
<div class="a" style="left:0.00px;top:238.28px;width:16.00px;height:1.00px;background:#e6e6e6;"></div>
<div class="t" style="top:229.54px;font-size:7.6px;color:#333;font-weight:normal;left:8.00px;"><span id="t87" style="display:inline-block;transform:scaleX(0.9683) translateX(-50%);transform-origin:0 0">6</span></div>
<div class="a" style="left:0.00px;top:251.02px;width:16.00px;height:1.00px;background:#e6e6e6;"></div>
<div class="t" style="top:242.28px;font-size:7.6px;color:#333;font-weight:normal;left:8.00px;"><span id="t88" style="display:inline-block;transform:scaleX(0.9683) translateX(-50%);transform-origin:0 0">7</span></div>
<div class="a" style="left:0.00px;top:263.76px;width:16.00px;height:1.00px;background:#e6e6e6;"></div>
<div class="t" style="top:255.02px;font-size:7.6px;color:#333;font-weight:normal;left:8.00px;"><span id="t89" style="display:inline-block;transform:scaleX(0.9683) translateX(-50%);transform-origin:0 0">8</span></div>
<div class="a" style="left:0.00px;top:276.50px;width:16.00px;height:1.00px;background:#e6e6e6;"></div>
<div class="t" style="top:267.76px;font-size:7.6px;color:#333;font-weight:normal;left:8.00px;"><span id="t90" style="display:inline-block;transform:scaleX(0.9683) translateX(-50%);transform-origin:0 0">9</span></div>
<div class="a" style="left:0.00px;top:289.24px;width:16.00px;height:1.00px;background:#e6e6e6;"></div>
<div class="t" style="top:280.50px;font-size:7.6px;color:#333;font-weight:normal;left:8.00px;"><span id="t91" style="display:inline-block;transform:scaleX(0.9701) translateX(-50%);transform-origin:0 0">10</span></div>
<div class="a" style="left:0.00px;top:301.98px;width:16.00px;height:1.00px;background:#e6e6e6;"></div>
<div class="t" style="top:293.24px;font-size:7.6px;color:#333;font-weight:normal;left:8.00px;"><span id="t92" style="display:inline-block;transform:scaleX(1.0392) translateX(-50%);transform-origin:0 0">11</span></div>
<div class="a" style="left:0.00px;top:314.72px;width:16.00px;height:1.00px;background:#e6e6e6;"></div>
<div class="t" style="top:305.98px;font-size:7.6px;color:#333;font-weight:normal;left:8.00px;"><span id="t93" style="display:inline-block;transform:scaleX(0.9701) translateX(-50%);transform-origin:0 0">12</span></div>
<div class="a" style="left:0.00px;top:327.46px;width:16.00px;height:1.00px;background:#e6e6e6;"></div>
<div class="t" style="top:318.72px;font-size:7.6px;color:#333;font-weight:normal;left:8.00px;"><span id="t94" style="display:inline-block;transform:scaleX(0.9701) translateX(-50%);transform-origin:0 0">13</span></div>
<div class="a" style="left:0.00px;top:340.20px;width:16.00px;height:1.00px;background:#e6e6e6;"></div>
<div class="t" style="top:331.46px;font-size:7.6px;color:#333;font-weight:normal;left:8.00px;"><span id="t95" style="display:inline-block;transform:scaleX(0.9701) translateX(-50%);transform-origin:0 0">14</span></div>
<div class="a" style="left:0.00px;top:352.94px;width:16.00px;height:1.00px;background:#e6e6e6;"></div>
<div class="t" style="top:344.20px;font-size:7.6px;color:#333;font-weight:normal;left:8.00px;"><span id="t96" style="display:inline-block;transform:scaleX(0.9701) translateX(-50%);transform-origin:0 0">15</span></div>
<div class="a" style="left:0.00px;top:365.68px;width:16.00px;height:1.00px;background:#e6e6e6;"></div>
<div class="t" style="top:356.94px;font-size:7.6px;color:#333;font-weight:normal;left:8.00px;"><span id="t97" style="display:inline-block;transform:scaleX(0.9701) translateX(-50%);transform-origin:0 0">16</span></div>
<div class="a" style="left:0.00px;top:378.42px;width:16.00px;height:1.00px;background:#e6e6e6;"></div>
<div class="t" style="top:369.68px;font-size:7.6px;color:#333;font-weight:normal;left:8.00px;"><span id="t98" style="display:inline-block;transform:scaleX(0.9701) translateX(-50%);transform-origin:0 0">17</span></div>
<div class="a" style="left:0.00px;top:391.16px;width:16.00px;height:1.00px;background:#e6e6e6;"></div>
<div class="t" style="top:382.42px;font-size:7.6px;color:#333;font-weight:normal;left:8.00px;"><span id="t99" style="display:inline-block;transform:scaleX(0.9701) translateX(-50%);transform-origin:0 0">18</span></div>
<div class="a" style="left:0.00px;top:403.90px;width:16.00px;height:1.00px;background:#e6e6e6;"></div>
<div class="t" style="top:395.16px;font-size:7.6px;color:#333;font-weight:normal;left:8.00px;"><span id="t100" style="display:inline-block;transform:scaleX(0.9701) translateX(-50%);transform-origin:0 0">19</span></div>
<div class="a" style="left:0.00px;top:416.64px;width:16.00px;height:1.00px;background:#e6e6e6;"></div>
<div class="t" style="top:407.90px;font-size:7.6px;color:#333;font-weight:normal;left:8.00px;"><span id="t101" style="display:inline-block;transform:scaleX(0.9701) translateX(-50%);transform-origin:0 0">20</span></div>
<div class="a" style="left:0.00px;top:428.64px;width:16.00px;height:1.00px;background:#e6e6e6;"></div>
<div class="t" style="top:420.07px;font-size:7.6px;color:#333;font-weight:normal;left:8.00px;"><span id="t102" style="display:inline-block;transform:scaleX(0.9701) translateX(-50%);transform-origin:0 0">21</span></div>
<div class="a" style="left:0.00px;top:440.64px;width:16.00px;height:1.00px;background:#e6e6e6;"></div>
<div class="t" style="top:432.07px;font-size:7.6px;color:#333;font-weight:normal;left:8.00px;"><span id="t103" style="display:inline-block;transform:scaleX(0.9701) translateX(-50%);transform-origin:0 0">22</span></div>
<div class="a" style="left:0.00px;top:452.64px;width:16.00px;height:1.00px;background:#e6e6e6;"></div>
<div class="t" style="top:444.07px;font-size:7.6px;color:#333;font-weight:normal;left:8.00px;"><span id="t104" style="display:inline-block;transform:scaleX(0.9701) translateX(-50%);transform-origin:0 0">23</span></div>
<div class="a" style="left:0.00px;top:464.64px;width:16.00px;height:1.00px;background:#e6e6e6;"></div>
<div class="t" style="top:456.07px;font-size:7.6px;color:#333;font-weight:normal;left:8.00px;"><span id="t105" style="display:inline-block;transform:scaleX(0.9701) translateX(-50%);transform-origin:0 0">24</span></div>
<div class="a" style="left:0.00px;top:476.64px;width:16.00px;height:1.00px;background:#e6e6e6;"></div>
<div class="t" style="top:468.07px;font-size:7.6px;color:#333;font-weight:normal;left:8.00px;"><span id="t106" style="display:inline-block;transform:scaleX(0.9701) translateX(-50%);transform-origin:0 0">25</span></div>
<div class="a" style="left:0.00px;top:488.64px;width:16.00px;height:1.00px;background:#e6e6e6;"></div>
<div class="t" style="top:480.07px;font-size:7.6px;color:#333;font-weight:normal;left:8.00px;"><span id="t107" style="display:inline-block;transform:scaleX(0.9701) translateX(-50%);transform-origin:0 0">26</span></div>
<div class="a" style="left:0.00px;top:500.64px;width:16.00px;height:1.00px;background:#e6e6e6;"></div>
<div class="t" style="top:492.07px;font-size:7.6px;color:#333;font-weight:normal;left:8.00px;"><span id="t108" style="display:inline-block;transform:scaleX(0.9701) translateX(-50%);transform-origin:0 0">27</span></div>
<div class="a" style="left:0.00px;top:512.64px;width:16.00px;height:1.00px;background:#e6e6e6;"></div>
<div class="t" style="top:504.07px;font-size:7.6px;color:#333;font-weight:normal;left:8.00px;"><span id="t109" style="display:inline-block;transform:scaleX(0.9701) translateX(-50%);transform-origin:0 0">28</span></div>
<div class="a" style="left:0.00px;top:524.64px;width:16.00px;height:1.00px;background:#e6e6e6;"></div>
<div class="t" style="top:516.07px;font-size:7.6px;color:#333;font-weight:normal;left:8.00px;"><span id="t110" style="display:inline-block;transform:scaleX(0.9701) translateX(-50%);transform-origin:0 0">29</span></div>
<div class="a" style="left:0.00px;top:536.64px;width:16.00px;height:1.00px;background:#e6e6e6;"></div>
<div class="t" style="top:528.07px;font-size:7.6px;color:#333;font-weight:normal;left:8.00px;"><span id="t111" style="display:inline-block;transform:scaleX(0.9701) translateX(-50%);transform-origin:0 0">30</span></div>
<div class="a" style="left:14.50px;top:489.14px;width:2.00px;height:12.00px;background:#217346;"></div>
<div class="a" style="left:1007.00px;top:164.50px;width:1.00px;height:373.00px;background:#b5b5b5;"></div>
<div class="a" style="left:16.50px;top:176.20px;width:283.50px;height:1.30px;background:#000;"></div>
<div class="a" style="left:16.50px;top:212.80px;width:283.50px;height:1.40px;background:#000;"></div>
<div class="a" style="left:298.50px;top:176.20px;width:1.50px;height:241.80px;background:#000;"></div>
<div class="a" style="left:16.50px;top:416.40px;width:283.50px;height:1.50px;background:#000;"></div>
<div class="a" style="left:61.80px;top:213.00px;width:2.00px;height:204.50px;background:#000;"></div>
<div class="a" style="left:110.00px;top:213.00px;width:1.20px;height:204.50px;background:#000;"></div>
<div class="a" style="left:157.00px;top:213.00px;width:1.20px;height:204.50px;background:#000;"></div>
<div class="a" style="left:16.50px;top:237.78px;width:283.50px;height:2.00px;background:#000;"></div>
<div class="a" style="left:16.50px;top:263.65px;width:283.50px;height:1.20px;background:#000;"></div>
<div class="a" style="left:16.50px;top:288.73px;width:283.50px;height:2.00px;background:#000;"></div>
<div class="a" style="left:16.50px;top:314.60px;width:283.50px;height:1.20px;background:#000;"></div>
<div class="a" style="left:16.50px;top:339.68px;width:283.50px;height:2.00px;background:#000;"></div>
<div class="a" style="left:16.50px;top:365.55px;width:283.50px;height:1.20px;background:#000;"></div>
<div class="a" style="left:16.50px;top:390.62px;width:283.50px;height:2.00px;background:#000;"></div>
<div class="t k" id="t112" style="top:191.83px;font-size:8px;color:#1c1c30;font-weight:normal;left:69.20px;transform:scaleX(0.9479);transform-origin:0 0;">YOYO iR1</div>
<div class="t k" id="t113" style="top:191.83px;font-size:8px;color:#1c1c30;font-weight:normal;left:160.50px;transform:scaleX(1.0856);transform-origin:0 0;">Heart Rate</div>
<svg style="left:256.5px;top:180.8px" width="29" height="26.5" viewBox="0 0 29 26.5"><defs><linearGradient id="hg" x1="0" x2="1" y1="0" y2="0"><stop offset="0" stop-color="#ffff00"/><stop offset="0.5" stop-color="#ff8c00"/><stop offset="1" stop-color="#ff0000"/></linearGradient></defs><path d="M14.1 6.1 C12.5 2 10 0.2 6.6 0.2 C2.5 0.2 0.4 2.7 0.4 6.5 V10.5 C0.4 13.5 2.5 15.8 4.8 18 L14.1 26.1 L23.2 18 C25.8 15.6 28.2 13.5 28.2 10.5 V6.5 C28.2 2.7 26 0.5 22.3 0.5 C18.5 0.5 15.8 2 14.1 6.1Z" fill="url(#hg)"/></svg>
<svg style="left:0;top:0" width="1" height="1"><defs><linearGradient id="bg" x1="0" x2="1" y1="0" y2="0"><stop offset="0" stop-color="#ffff00"/><stop offset="0.45" stop-color="#ff9900"/><stop offset="1" stop-color="#ff0000"/></linearGradient></defs></svg>
<div class="t k" id="t114" style="top:222.43px;font-size:8px;color:#111;font-weight:normal;left:22.30px;transform:scaleX(1.1464);transform-origin:0 0;">Athlete 1</div>
<div class="t k" style="top:216.73px;font-size:8px;color:#ff0000;font-weight:normal;left:86.00px;"><span id="t115" style="display:inline-block;transform:scaleX(0.9081) translateX(-50%);transform-origin:0 0">HR</span></div>
<div class="t k" style="top:229.23px;font-size:8px;color:#00b050;font-weight:normal;left:87.30px;"><span id="t116" style="display:inline-block;transform:scaleX(0.9081) translateX(-50%);transform-origin:0 0">YOYO</span></div>
<div class="t k" style="top:216.73px;font-size:8px;color:#111;font-weight:normal;left:134.50px;"><span id="t117" style="display:inline-block;transform:scaleX(1.0000) translateX(-50%);transform-origin:0 0">115</span></div>
<div class="t k" style="top:229.23px;font-size:8px;color:#111;font-weight:normal;left:134.80px;"><span id="t118" style="display:inline-block;transform:scaleX(1.0000) translateX(-50%);transform-origin:0 0">19.7</span></div>
<svg style="left:158.2px;top:215.90px" width="54.80" height="20" viewBox="0 0 54.80 20" preserveAspectRatio="none"><rect width="54.80" height="20" fill="url(#bg)"/></svg>
<div class="t" id="t119" style="top:224.14px;font-size:6.8px;color:#000;font-weight:bold;left:163.60px;transform:scaleX(1.0940);transform-origin:0 0;">115</div>
<div class="t k" id="t120" style="top:247.90px;font-size:8px;color:#111;font-weight:normal;left:22.30px;transform:scaleX(1.1464);transform-origin:0 0;">Athlete 2</div>
<div class="t k" style="top:242.20px;font-size:8px;color:#ff0000;font-weight:normal;left:86.00px;"><span id="t121" style="display:inline-block;transform:scaleX(0.9081) translateX(-50%);transform-origin:0 0">HR</span></div>
<div class="t k" style="top:254.70px;font-size:8px;color:#00b050;font-weight:normal;left:87.30px;"><span id="t122" style="display:inline-block;transform:scaleX(0.9081) translateX(-50%);transform-origin:0 0">YOYO</span></div>
<div class="t k" style="top:242.20px;font-size:8px;color:#111;font-weight:normal;left:134.50px;"><span id="t123" style="display:inline-block;transform:scaleX(1.0000) translateX(-50%);transform-origin:0 0">206</span></div>
<div class="t k" style="top:254.70px;font-size:8px;color:#111;font-weight:normal;left:134.80px;"><span id="t124" style="display:inline-block;transform:scaleX(1.0000) translateX(-50%);transform-origin:0 0">19.1</span></div>
<svg style="left:158.2px;top:241.38px" width="100.80" height="20" viewBox="0 0 100.80 20" preserveAspectRatio="none"><rect width="100.80" height="20" fill="url(#bg)"/></svg>
<div class="t" id="t125" style="top:249.62px;font-size:6.8px;color:#000;font-weight:bold;left:163.60px;transform:scaleX(1.0579);transform-origin:0 0;">206</div>
<div class="t k" id="t126" style="top:273.38px;font-size:8px;color:#111;font-weight:normal;left:22.30px;transform:scaleX(1.1464);transform-origin:0 0;">Athlete 3</div>
<div class="t k" style="top:267.68px;font-size:8px;color:#ff0000;font-weight:normal;left:86.00px;"><span id="t127" style="display:inline-block;transform:scaleX(0.9081) translateX(-50%);transform-origin:0 0">HR</span></div>
<div class="t k" style="top:280.18px;font-size:8px;color:#00b050;font-weight:normal;left:87.30px;"><span id="t128" style="display:inline-block;transform:scaleX(0.9081) translateX(-50%);transform-origin:0 0">YOYO</span></div>
<div class="t k" style="top:267.68px;font-size:8px;color:#111;font-weight:normal;left:134.50px;"><span id="t129" style="display:inline-block;transform:scaleX(1.0000) translateX(-50%);transform-origin:0 0">94</span></div>
<div class="t k" style="top:280.18px;font-size:8px;color:#111;font-weight:normal;left:134.80px;"><span id="t130" style="display:inline-block;transform:scaleX(1.0000) translateX(-50%);transform-origin:0 0">17.5</span></div>
<svg style="left:158.2px;top:266.85px" width="44.80" height="20" viewBox="0 0 44.80 20" preserveAspectRatio="none"><rect width="44.80" height="20" fill="url(#bg)"/></svg>
<div class="t" id="t131" style="top:275.09px;font-size:6.8px;color:#000;font-weight:bold;left:163.60px;transform:scaleX(1.0579);transform-origin:0 0;">94</div>
<div class="t k" id="t132" style="top:298.85px;font-size:8px;color:#111;font-weight:normal;left:22.30px;transform:scaleX(1.1464);transform-origin:0 0;">Athlete 4</div>
<div class="t k" style="top:293.15px;font-size:8px;color:#ff0000;font-weight:normal;left:86.00px;"><span id="t133" style="display:inline-block;transform:scaleX(0.9081) translateX(-50%);transform-origin:0 0">HR</span></div>
<div class="t k" style="top:305.65px;font-size:8px;color:#00b050;font-weight:normal;left:87.30px;"><span id="t134" style="display:inline-block;transform:scaleX(0.9081) translateX(-50%);transform-origin:0 0">YOYO</span></div>
<div class="t k" style="top:293.15px;font-size:8px;color:#111;font-weight:normal;left:134.50px;"><span id="t135" style="display:inline-block;transform:scaleX(1.0000) translateX(-50%);transform-origin:0 0">110</span></div>
<div class="t k" style="top:305.65px;font-size:8px;color:#111;font-weight:normal;left:134.80px;"><span id="t136" style="display:inline-block;transform:scaleX(1.0000) translateX(-50%);transform-origin:0 0">19.6</span></div>
<svg style="left:158.2px;top:292.33px" width="52.60" height="20" viewBox="0 0 52.60 20" preserveAspectRatio="none"><rect width="52.60" height="20" fill="url(#bg)"/></svg>
<div class="t" id="t137" style="top:300.57px;font-size:6.8px;color:#000;font-weight:bold;left:163.60px;transform:scaleX(1.0940);transform-origin:0 0;">110</div>
<div class="t k" id="t138" style="top:324.33px;font-size:8px;color:#111;font-weight:normal;left:22.30px;transform:scaleX(1.1464);transform-origin:0 0;">Athlete 5</div>
<div class="t k" style="top:318.63px;font-size:8px;color:#ff0000;font-weight:normal;left:86.00px;"><span id="t139" style="display:inline-block;transform:scaleX(0.9081) translateX(-50%);transform-origin:0 0">HR</span></div>
<div class="t k" style="top:331.13px;font-size:8px;color:#00b050;font-weight:normal;left:87.30px;"><span id="t140" style="display:inline-block;transform:scaleX(0.9081) translateX(-50%);transform-origin:0 0">YOYO</span></div>
<div class="t k" style="top:318.63px;font-size:8px;color:#111;font-weight:normal;left:134.50px;"><span id="t141" style="display:inline-block;transform:scaleX(1.0000) translateX(-50%);transform-origin:0 0">192</span></div>
<div class="t k" style="top:331.13px;font-size:8px;color:#111;font-weight:normal;left:134.80px;"><span id="t142" style="display:inline-block;transform:scaleX(1.0000) translateX(-50%);transform-origin:0 0">18.3</span></div>
<svg style="left:158.2px;top:317.80px" width="93.80" height="20" viewBox="0 0 93.80 20" preserveAspectRatio="none"><rect width="93.80" height="20" fill="url(#bg)"/></svg>
<div class="t" id="t143" style="top:326.04px;font-size:6.8px;color:#000;font-weight:bold;left:163.60px;transform:scaleX(1.0579);transform-origin:0 0;">192</div>
<div class="t k" id="t144" style="top:349.80px;font-size:8px;color:#111;font-weight:normal;left:22.30px;transform:scaleX(1.1464);transform-origin:0 0;">Athlete 6</div>
<div class="t k" style="top:344.10px;font-size:8px;color:#ff0000;font-weight:normal;left:86.00px;"><span id="t145" style="display:inline-block;transform:scaleX(0.9081) translateX(-50%);transform-origin:0 0">HR</span></div>
<div class="t k" style="top:356.60px;font-size:8px;color:#00b050;font-weight:normal;left:87.30px;"><span id="t146" style="display:inline-block;transform:scaleX(0.9081) translateX(-50%);transform-origin:0 0">YOYO</span></div>
<div class="t k" style="top:344.10px;font-size:8px;color:#111;font-weight:normal;left:134.50px;"><span id="t147" style="display:inline-block;transform:scaleX(1.0000) translateX(-50%);transform-origin:0 0">169</span></div>
<div class="t k" style="top:356.60px;font-size:8px;color:#111;font-weight:normal;left:134.80px;"><span id="t148" style="display:inline-block;transform:scaleX(1.0000) translateX(-50%);transform-origin:0 0">19.5</span></div>
<svg style="left:158.2px;top:343.28px" width="82.60" height="20" viewBox="0 0 82.60 20" preserveAspectRatio="none"><rect width="82.60" height="20" fill="url(#bg)"/></svg>
<div class="t" id="t149" style="top:351.52px;font-size:6.8px;color:#000;font-weight:bold;left:163.60px;transform:scaleX(1.0579);transform-origin:0 0;">169</div>
<div class="t k" id="t150" style="top:375.28px;font-size:8px;color:#111;font-weight:normal;left:22.30px;transform:scaleX(1.1464);transform-origin:0 0;">Athlete 7</div>
<div class="t k" style="top:369.58px;font-size:8px;color:#ff0000;font-weight:normal;left:86.00px;"><span id="t151" style="display:inline-block;transform:scaleX(0.9081) translateX(-50%);transform-origin:0 0">HR</span></div>
<div class="t k" style="top:382.08px;font-size:8px;color:#00b050;font-weight:normal;left:87.30px;"><span id="t152" style="display:inline-block;transform:scaleX(0.9081) translateX(-50%);transform-origin:0 0">YOYO</span></div>
<div class="t k" style="top:369.58px;font-size:8px;color:#111;font-weight:normal;left:134.50px;"><span id="t153" style="display:inline-block;transform:scaleX(1.0000) translateX(-50%);transform-origin:0 0">133</span></div>
<div class="t k" style="top:382.08px;font-size:8px;color:#111;font-weight:normal;left:134.80px;"><span id="t154" style="display:inline-block;transform:scaleX(1.0000) translateX(-50%);transform-origin:0 0">18.4</span></div>
<svg style="left:158.2px;top:368.75px" width="63.80" height="20" viewBox="0 0 63.80 20" preserveAspectRatio="none"><rect width="63.80" height="20" fill="url(#bg)"/></svg>
<div class="t" id="t155" style="top:376.99px;font-size:6.8px;color:#000;font-weight:bold;left:163.60px;transform:scaleX(1.0579);transform-origin:0 0;">133</div>
<div class="t k" id="t156" style="top:400.75px;font-size:8px;color:#111;font-weight:normal;left:22.30px;transform:scaleX(1.1464);transform-origin:0 0;">Athlete 8</div>
<div class="t k" style="top:395.05px;font-size:8px;color:#ff0000;font-weight:normal;left:86.00px;"><span id="t157" style="display:inline-block;transform:scaleX(0.9081) translateX(-50%);transform-origin:0 0">HR</span></div>
<div class="t k" style="top:407.55px;font-size:8px;color:#00b050;font-weight:normal;left:87.30px;"><span id="t158" style="display:inline-block;transform:scaleX(0.9081) translateX(-50%);transform-origin:0 0">YOYO</span></div>
<div class="t k" style="top:395.05px;font-size:8px;color:#111;font-weight:normal;left:134.50px;"><span id="t159" style="display:inline-block;transform:scaleX(1.0000) translateX(-50%);transform-origin:0 0">191</span></div>
<div class="t k" style="top:407.55px;font-size:8px;color:#111;font-weight:normal;left:134.80px;"><span id="t160" style="display:inline-block;transform:scaleX(1.0000) translateX(-50%);transform-origin:0 0">19.1</span></div>
<svg style="left:158.2px;top:394.23px" width="97.60" height="20" viewBox="0 0 97.60 20" preserveAspectRatio="none"><rect width="97.60" height="20" fill="url(#bg)"/></svg>
<div class="t" id="t161" style="top:402.47px;font-size:6.8px;color:#000;font-weight:bold;left:163.60px;transform:scaleX(1.0579);transform-origin:0 0;">191</div>
<div class="a" style="left:393.20px;top:176.20px;width:142.80px;height:1.30px;background:#000;"></div>
<div class="a" style="left:393.20px;top:212.90px;width:142.80px;height:1.20px;background:#000;"></div>
<div class="a" style="left:393.20px;top:176.20px;width:2.00px;height:241.80px;background:#000;"></div>
<div class="a" style="left:534.30px;top:176.20px;width:1.70px;height:241.80px;background:#000;"></div>
<div class="a" style="left:393.20px;top:416.40px;width:142.80px;height:1.50px;background:#000;"></div>
<div class="a" style="left:440.20px;top:213.00px;width:1.80px;height:204.50px;background:#000;"></div>
<div class="a" style="left:487.80px;top:213.00px;width:1.30px;height:204.50px;background:#000;"></div>
<div class="a" style="left:393.20px;top:237.78px;width:142.80px;height:2.00px;background:#000;"></div>
<div class="a" style="left:393.20px;top:263.65px;width:142.80px;height:1.20px;background:#000;"></div>
<div class="a" style="left:393.20px;top:288.73px;width:142.80px;height:2.00px;background:#000;"></div>
<div class="a" style="left:393.20px;top:314.60px;width:142.80px;height:1.20px;background:#000;"></div>
<div class="a" style="left:393.20px;top:339.68px;width:142.80px;height:2.00px;background:#000;"></div>
<div class="a" style="left:393.20px;top:365.55px;width:142.80px;height:1.20px;background:#000;"></div>
<div class="a" style="left:393.20px;top:390.62px;width:142.80px;height:2.00px;background:#000;"></div>
<div class="a" style="left:488.00px;top:224.90px;width:47.00px;height:2.00px;background:#000;"></div>
<div class="a" style="left:488.00px;top:250.78px;width:47.00px;height:1.20px;background:#000;"></div>
<div class="a" style="left:488.00px;top:275.85px;width:47.00px;height:2.00px;background:#000;"></div>
<div class="a" style="left:488.00px;top:301.73px;width:47.00px;height:1.20px;background:#000;"></div>
<div class="a" style="left:488.00px;top:326.80px;width:47.00px;height:2.00px;background:#000;"></div>
<div class="a" style="left:488.00px;top:352.68px;width:47.00px;height:1.20px;background:#000;"></div>
<div class="a" style="left:488.00px;top:377.75px;width:47.00px;height:2.00px;background:#000;"></div>
<div class="a" style="left:488.00px;top:403.62px;width:47.00px;height:1.20px;background:#000;"></div>
<div class="t k" id="t162" style="top:191.83px;font-size:8px;color:#1c1c30;font-weight:normal;left:427.80px;transform:scaleX(1.0677);transform-origin:0 0;">Lower Body Power</div>
<div class="t k" id="t163" style="top:222.20px;font-size:7.8px;color:#111;font-weight:normal;left:400.00px;transform:scaleX(1.1890);transform-origin:0 0;">Athlete 1</div>
<div class="t k" style="top:216.10px;font-size:7.8px;color:#1c1c30;font-weight:normal;left:465.20px;"><span id="t164" style="display:inline-block;transform:scaleX(0.9419) translateX(-50%);transform-origin:0 0">CMJ</span></div>
<div class="t k" id="t165" style="top:228.80px;font-size:7.8px;color:#1c1c30;font-weight:normal;left:448.30px;transform:scaleX(0.9625);transform-origin:0 0;">NON CMJ</div>
<div class="t k" style="top:216.10px;font-size:7.8px;color:#111;font-weight:normal;left:512.50px;"><span id="t166" style="display:inline-block;transform:scaleX(1.0000) translateX(-50%);transform-origin:0 0">50</span></div>
<div class="t k" style="top:228.80px;font-size:7.8px;color:#111;font-weight:normal;left:512.50px;"><span id="t167" style="display:inline-block;transform:scaleX(1.0000) translateX(-50%);transform-origin:0 0">38</span></div>
<div class="t k" id="t168" style="top:247.67px;font-size:7.8px;color:#111;font-weight:normal;left:400.00px;transform:scaleX(1.1890);transform-origin:0 0;">Athlete 2</div>
<div class="t k" style="top:241.57px;font-size:7.8px;color:#1c1c30;font-weight:normal;left:465.20px;"><span id="t169" style="display:inline-block;transform:scaleX(0.9419) translateX(-50%);transform-origin:0 0">CMJ</span></div>
<div class="t k" id="t170" style="top:254.27px;font-size:7.8px;color:#1c1c30;font-weight:normal;left:448.30px;transform:scaleX(0.9625);transform-origin:0 0;">NON CMJ</div>
<div class="t k" style="top:241.57px;font-size:7.8px;color:#111;font-weight:normal;left:512.50px;"><span id="t171" style="display:inline-block;transform:scaleX(1.0000) translateX(-50%);transform-origin:0 0">37</span></div>
<div class="t k" style="top:254.27px;font-size:7.8px;color:#111;font-weight:normal;left:512.50px;"><span id="t172" style="display:inline-block;transform:scaleX(1.0000) translateX(-50%);transform-origin:0 0">49</span></div>
<div class="t k" id="t173" style="top:273.15px;font-size:7.8px;color:#111;font-weight:normal;left:400.00px;transform:scaleX(1.1890);transform-origin:0 0;">Athlete 3</div>
<div class="t k" style="top:267.05px;font-size:7.8px;color:#1c1c30;font-weight:normal;left:465.20px;"><span id="t174" style="display:inline-block;transform:scaleX(0.9419) translateX(-50%);transform-origin:0 0">CMJ</span></div>
<div class="t k" id="t175" style="top:279.75px;font-size:7.8px;color:#1c1c30;font-weight:normal;left:448.30px;transform:scaleX(0.9625);transform-origin:0 0;">NON CMJ</div>
<div class="t k" style="top:267.05px;font-size:7.8px;color:#111;font-weight:normal;left:512.50px;"><span id="t176" style="display:inline-block;transform:scaleX(1.0000) translateX(-50%);transform-origin:0 0">37</span></div>
<div class="t k" style="top:279.75px;font-size:7.8px;color:#111;font-weight:normal;left:512.50px;"><span id="t177" style="display:inline-block;transform:scaleX(1.0000) translateX(-50%);transform-origin:0 0">45</span></div>
<div class="t k" id="t178" style="top:298.62px;font-size:7.8px;color:#111;font-weight:normal;left:400.00px;transform:scaleX(1.1890);transform-origin:0 0;">Athlete 4</div>
<div class="t k" style="top:292.52px;font-size:7.8px;color:#1c1c30;font-weight:normal;left:465.20px;"><span id="t179" style="display:inline-block;transform:scaleX(0.9419) translateX(-50%);transform-origin:0 0">CMJ</span></div>
<div class="t k" id="t180" style="top:305.22px;font-size:7.8px;color:#1c1c30;font-weight:normal;left:448.30px;transform:scaleX(0.9625);transform-origin:0 0;">NON CMJ</div>
<div class="t k" style="top:292.52px;font-size:7.8px;color:#111;font-weight:normal;left:512.50px;"><span id="t181" style="display:inline-block;transform:scaleX(1.0000) translateX(-50%);transform-origin:0 0">50</span></div>
<div class="t k" style="top:305.22px;font-size:7.8px;color:#111;font-weight:normal;left:512.50px;"><span id="t182" style="display:inline-block;transform:scaleX(1.0000) translateX(-50%);transform-origin:0 0">51</span></div>
<div class="t k" id="t183" style="top:324.10px;font-size:7.8px;color:#111;font-weight:normal;left:400.00px;transform:scaleX(1.1890);transform-origin:0 0;">Athlete 5</div>
<div class="t k" style="top:318.00px;font-size:7.8px;color:#1c1c30;font-weight:normal;left:465.20px;"><span id="t184" style="display:inline-block;transform:scaleX(0.9419) translateX(-50%);transform-origin:0 0">CMJ</span></div>
<div class="t k" id="t185" style="top:330.70px;font-size:7.8px;color:#1c1c30;font-weight:normal;left:448.30px;transform:scaleX(0.9625);transform-origin:0 0;">NON CMJ</div>
<div class="t k" style="top:318.00px;font-size:7.8px;color:#111;font-weight:normal;left:512.50px;"><span id="t186" style="display:inline-block;transform:scaleX(1.0000) translateX(-50%);transform-origin:0 0">51</span></div>
<div class="t k" style="top:330.70px;font-size:7.8px;color:#111;font-weight:normal;left:512.50px;"><span id="t187" style="display:inline-block;transform:scaleX(1.0000) translateX(-50%);transform-origin:0 0">52</span></div>
<div class="t k" id="t188" style="top:349.57px;font-size:7.8px;color:#111;font-weight:normal;left:400.00px;transform:scaleX(1.1890);transform-origin:0 0;">Athlete 6</div>
<div class="t k" style="top:343.47px;font-size:7.8px;color:#1c1c30;font-weight:normal;left:465.20px;"><span id="t189" style="display:inline-block;transform:scaleX(0.9419) translateX(-50%);transform-origin:0 0">CMJ</span></div>
<div class="t k" id="t190" style="top:356.17px;font-size:7.8px;color:#1c1c30;font-weight:normal;left:448.30px;transform:scaleX(0.9625);transform-origin:0 0;">NON CMJ</div>
<div class="t k" style="top:343.47px;font-size:7.8px;color:#111;font-weight:normal;left:512.50px;"><span id="t191" style="display:inline-block;transform:scaleX(1.0000) translateX(-50%);transform-origin:0 0">54</span></div>
<div class="t k" style="top:356.17px;font-size:7.8px;color:#111;font-weight:normal;left:512.50px;"><span id="t192" style="display:inline-block;transform:scaleX(1.0000) translateX(-50%);transform-origin:0 0">44</span></div>
<div class="t k" id="t193" style="top:375.05px;font-size:7.8px;color:#111;font-weight:normal;left:400.00px;transform:scaleX(1.1890);transform-origin:0 0;">Athlete 7</div>
<div class="t k" style="top:368.95px;font-size:7.8px;color:#1c1c30;font-weight:normal;left:465.20px;"><span id="t194" style="display:inline-block;transform:scaleX(0.9419) translateX(-50%);transform-origin:0 0">CMJ</span></div>
<div class="t k" id="t195" style="top:381.65px;font-size:7.8px;color:#1c1c30;font-weight:normal;left:448.30px;transform:scaleX(0.9625);transform-origin:0 0;">NON CMJ</div>
<div class="t k" style="top:368.95px;font-size:7.8px;color:#111;font-weight:normal;left:512.50px;"><span id="t196" style="display:inline-block;transform:scaleX(1.0000) translateX(-50%);transform-origin:0 0">36</span></div>
<div class="t k" style="top:381.65px;font-size:7.8px;color:#111;font-weight:normal;left:512.50px;"><span id="t197" style="display:inline-block;transform:scaleX(1.0000) translateX(-50%);transform-origin:0 0">55</span></div>
<div class="t k" id="t198" style="top:400.52px;font-size:7.8px;color:#111;font-weight:normal;left:400.00px;transform:scaleX(1.1890);transform-origin:0 0;">Athlete 8</div>
<div class="t k" style="top:394.42px;font-size:7.8px;color:#1c1c30;font-weight:normal;left:465.20px;"><span id="t199" style="display:inline-block;transform:scaleX(0.9419) translateX(-50%);transform-origin:0 0">CMJ</span></div>
<div class="t k" id="t200" style="top:407.12px;font-size:7.8px;color:#1c1c30;font-weight:normal;left:448.30px;transform:scaleX(0.9625);transform-origin:0 0;">NON CMJ</div>
<div class="t k" style="top:394.42px;font-size:7.8px;color:#111;font-weight:normal;left:512.50px;"><span id="t201" style="display:inline-block;transform:scaleX(1.0000) translateX(-50%);transform-origin:0 0">52</span></div>
<div class="t k" style="top:407.12px;font-size:7.8px;color:#111;font-weight:normal;left:512.50px;"><span id="t202" style="display:inline-block;transform:scaleX(1.0000) translateX(-50%);transform-origin:0 0">48</span></div>
<div class="a" style="left:543.3px;top:176.2px;width:445.7px;height:243.4px;background:radial-gradient(ellipse 75% 85% at 50% 42%, #4c4c4c 0%, #404040 50%, #2a2a2a 100%)"></div>
<div class="t" style="top:185.08px;font-size:10.3px;color:#00b0f0;font-weight:bold;left:766.00px;letter-spacing:1px;"><span id="t203" style="display:inline-block;transform:scaleX(1.0290) translateX(-50%);transform-origin:0 0">Power - CMJ/Non CMJ</span></div>
<div class="t" style="top:368.55px;font-size:7.5px;color:#f0f0f0;font-weight:normal;left:552.50px;"><span id="t204" style="display:inline-block;transform:scaleX(1.0000) translateX(-50%);transform-origin:0 0">0</span></div>
<div class="a" style="left:565.00px;top:344.02px;width:414.70px;height:1.00px;background:#565656;"></div>
<div class="t" style="top:341.17px;font-size:7.5px;color:#f0f0f0;font-weight:normal;left:552.50px;"><span id="t205" style="display:inline-block;transform:scaleX(1.0000) translateX(-50%);transform-origin:0 0">10</span></div>
<div class="a" style="left:565.00px;top:316.63px;width:414.70px;height:1.00px;background:#565656;"></div>
<div class="t" style="top:313.78px;font-size:7.5px;color:#f0f0f0;font-weight:normal;left:552.50px;"><span id="t206" style="display:inline-block;transform:scaleX(1.0000) translateX(-50%);transform-origin:0 0">20</span></div>
<div class="a" style="left:565.00px;top:289.25px;width:414.70px;height:1.00px;background:#565656;"></div>
<div class="t" style="top:286.40px;font-size:7.5px;color:#f0f0f0;font-weight:normal;left:552.50px;"><span id="t207" style="display:inline-block;transform:scaleX(1.0000) translateX(-50%);transform-origin:0 0">30</span></div>
<div class="a" style="left:565.00px;top:261.87px;width:414.70px;height:1.00px;background:#565656;"></div>
<div class="t" style="top:259.02px;font-size:7.5px;color:#f0f0f0;font-weight:normal;left:552.50px;"><span id="t208" style="display:inline-block;transform:scaleX(1.0000) translateX(-50%);transform-origin:0 0">40</span></div>
<div class="a" style="left:565.00px;top:234.48px;width:414.70px;height:1.00px;background:#565656;"></div>
<div class="t" style="top:231.63px;font-size:7.5px;color:#f0f0f0;font-weight:normal;left:552.50px;"><span id="t209" style="display:inline-block;transform:scaleX(1.0000) translateX(-50%);transform-origin:0 0">50</span></div>
<div class="a" style="left:565.00px;top:207.10px;width:414.70px;height:1.00px;background:#565656;"></div>
<div class="t" style="top:204.25px;font-size:7.5px;color:#f0f0f0;font-weight:normal;left:552.50px;"><span id="t210" style="display:inline-block;transform:scaleX(1.0000) translateX(-50%);transform-origin:0 0">60</span></div>
<div class="a" style="left:570.70px;top:234.98px;width:15.00px;height:136.92px;background:#00b0f0;"></div>
<div class="t k" style="top:241.97px;font-size:8.4px;color:#fff;font-weight:normal;left:578.20px;"><span id="t211" style="display:inline-block;transform:scaleX(1.0000) translateX(-50%);transform-origin:0 0">50</span></div>
<div class="a" style="left:596.40px;top:267.84px;width:15.00px;height:104.06px;background:#00b050;"></div>
<div class="t k" style="top:274.83px;font-size:8.4px;color:#fff;font-weight:normal;left:603.90px;"><span id="t212" style="display:inline-block;transform:scaleX(1.0000) translateX(-50%);transform-origin:0 0">38</span></div>
<div class="t" id="t213" style="top:563.95px;font-size:1px;color:#444;font-weight:normal;left:0.00px;transform:scaleX(1.0000);transform-origin:0 0;"></div>
<div class="t" style="top:379.45px;font-size:7.5px;color:#f0f0f0;font-weight:normal;left:578.20px;"><span id="t214" style="display:inline-block;transform:scaleX(1.0000) translateX(-50%);transform-origin:0 0">CMJ</span></div>
<div class="t" style="top:379.45px;font-size:7.5px;color:#f0f0f0;font-weight:normal;left:604.20px;"><span id="t215" style="display:inline-block;transform:scaleX(1.0000) translateX(-50%);transform-origin:0 0">NON</span></div>
<div class="t" style="top:389.05px;font-size:7.5px;color:#f0f0f0;font-weight:normal;left:604.60px;"><span id="t216" style="display:inline-block;transform:scaleX(1.0000) translateX(-50%);transform-origin:0 0">CMJ</span></div>
<div class="t k" style="top:407.60px;font-size:7.8px;color:#f2f2f2;font-weight:normal;left:590.73px;"><span id="t217" style="display:inline-block;transform:scaleX(1.0000) translateX(-50%);transform-origin:0 0">Athlete 1</span></div>
<div class="a" style="left:622.56px;top:270.58px;width:15.00px;height:101.32px;background:#00b0f0;"></div>
<div class="t k" style="top:277.57px;font-size:8.4px;color:#fff;font-weight:normal;left:630.06px;"><span id="t218" style="display:inline-block;transform:scaleX(1.0000) translateX(-50%);transform-origin:0 0">37</span></div>
<div class="a" style="left:648.26px;top:237.72px;width:15.00px;height:134.18px;background:#00b050;"></div>
<div class="t k" style="top:244.71px;font-size:8.4px;color:#fff;font-weight:normal;left:655.76px;"><span id="t219" style="display:inline-block;transform:scaleX(1.0000) translateX(-50%);transform-origin:0 0">49</span></div>
<div class="t" id="t220" style="top:615.81px;font-size:1px;color:#444;font-weight:normal;left:0.00px;transform:scaleX(1.0000);transform-origin:0 0;"></div>
<div class="t" style="top:379.45px;font-size:7.5px;color:#f0f0f0;font-weight:normal;left:630.06px;"><span id="t221" style="display:inline-block;transform:scaleX(1.0000) translateX(-50%);transform-origin:0 0">CMJ</span></div>
<div class="t" style="top:379.45px;font-size:7.5px;color:#f0f0f0;font-weight:normal;left:656.06px;"><span id="t222" style="display:inline-block;transform:scaleX(1.0000) translateX(-50%);transform-origin:0 0">NON</span></div>
<div class="t" style="top:389.05px;font-size:7.5px;color:#f0f0f0;font-weight:normal;left:656.46px;"><span id="t223" style="display:inline-block;transform:scaleX(1.0000) translateX(-50%);transform-origin:0 0">CMJ</span></div>
<div class="t k" style="top:407.60px;font-size:7.8px;color:#f2f2f2;font-weight:normal;left:642.59px;"><span id="t224" style="display:inline-block;transform:scaleX(1.0000) translateX(-50%);transform-origin:0 0">Athlete 2</span></div>
<div class="a" style="left:616.16px;top:372.00px;width:1.00px;height:43.60px;background:#7a7a7a;"></div>
<div class="a" style="left:674.42px;top:270.58px;width:15.00px;height:101.32px;background:#00b0f0;"></div>
<div class="t k" style="top:277.57px;font-size:8.4px;color:#fff;font-weight:normal;left:681.92px;"><span id="t225" style="display:inline-block;transform:scaleX(1.0000) translateX(-50%);transform-origin:0 0">37</span></div>
<div class="a" style="left:700.12px;top:248.68px;width:15.00px;height:123.22px;background:#00b050;"></div>
<div class="t k" style="top:255.66px;font-size:8.4px;color:#fff;font-weight:normal;left:707.62px;"><span id="t226" style="display:inline-block;transform:scaleX(1.0000) translateX(-50%);transform-origin:0 0">45</span></div>
<div class="t" id="t227" style="top:667.67px;font-size:1px;color:#444;font-weight:normal;left:0.00px;transform:scaleX(1.0000);transform-origin:0 0;"></div>
<div class="t" style="top:379.45px;font-size:7.5px;color:#f0f0f0;font-weight:normal;left:681.92px;"><span id="t228" style="display:inline-block;transform:scaleX(1.0000) translateX(-50%);transform-origin:0 0">CMJ</span></div>
<div class="t" style="top:379.45px;font-size:7.5px;color:#f0f0f0;font-weight:normal;left:707.92px;"><span id="t229" style="display:inline-block;transform:scaleX(1.0000) translateX(-50%);transform-origin:0 0">NON</span></div>
<div class="t" style="top:389.05px;font-size:7.5px;color:#f0f0f0;font-weight:normal;left:708.32px;"><span id="t230" style="display:inline-block;transform:scaleX(1.0000) translateX(-50%);transform-origin:0 0">CMJ</span></div>
<div class="t k" style="top:407.60px;font-size:7.8px;color:#f2f2f2;font-weight:normal;left:694.45px;"><span id="t231" style="display:inline-block;transform:scaleX(1.0000) translateX(-50%);transform-origin:0 0">Athlete 3</span></div>
<div class="a" style="left:668.02px;top:372.00px;width:1.00px;height:43.60px;background:#7a7a7a;"></div>
<div class="a" style="left:726.28px;top:234.98px;width:15.00px;height:136.92px;background:#00b0f0;"></div>
<div class="t k" style="top:241.97px;font-size:8.4px;color:#fff;font-weight:normal;left:733.78px;"><span id="t232" style="display:inline-block;transform:scaleX(1.0000) translateX(-50%);transform-origin:0 0">50</span></div>
<div class="a" style="left:751.98px;top:232.25px;width:15.00px;height:139.65px;background:#00b050;"></div>
<div class="t k" style="top:239.23px;font-size:8.4px;color:#fff;font-weight:normal;left:759.48px;"><span id="t233" style="display:inline-block;transform:scaleX(1.0000) translateX(-50%);transform-origin:0 0">51</span></div>
<div class="t" id="t234" style="top:719.53px;font-size:1px;color:#444;font-weight:normal;left:0.00px;transform:scaleX(1.0000);transform-origin:0 0;"></div>
<div class="t" style="top:379.45px;font-size:7.5px;color:#f0f0f0;font-weight:normal;left:733.78px;"><span id="t235" style="display:inline-block;transform:scaleX(1.0000) translateX(-50%);transform-origin:0 0">CMJ</span></div>
<div class="t" style="top:379.45px;font-size:7.5px;color:#f0f0f0;font-weight:normal;left:759.78px;"><span id="t236" style="display:inline-block;transform:scaleX(1.0000) translateX(-50%);transform-origin:0 0">NON</span></div>
<div class="t" style="top:389.05px;font-size:7.5px;color:#f0f0f0;font-weight:normal;left:760.18px;"><span id="t237" style="display:inline-block;transform:scaleX(1.0000) translateX(-50%);transform-origin:0 0">CMJ</span></div>
<div class="t k" style="top:407.60px;font-size:7.8px;color:#f2f2f2;font-weight:normal;left:746.31px;"><span id="t238" style="display:inline-block;transform:scaleX(1.0000) translateX(-50%);transform-origin:0 0">Athlete 4</span></div>
<div class="a" style="left:719.88px;top:372.00px;width:1.00px;height:43.60px;background:#7a7a7a;"></div>
<div class="a" style="left:778.14px;top:232.25px;width:15.00px;height:139.65px;background:#00b0f0;"></div>
<div class="t k" style="top:239.23px;font-size:8.4px;color:#fff;font-weight:normal;left:785.64px;"><span id="t239" style="display:inline-block;transform:scaleX(1.0000) translateX(-50%);transform-origin:0 0">51</span></div>
<div class="a" style="left:803.84px;top:229.51px;width:15.00px;height:142.39px;background:#00b050;"></div>
<div class="t k" style="top:236.50px;font-size:8.4px;color:#fff;font-weight:normal;left:811.34px;"><span id="t240" style="display:inline-block;transform:scaleX(1.0000) translateX(-50%);transform-origin:0 0">52</span></div>
<div class="t" id="t241" style="top:771.39px;font-size:1px;color:#444;font-weight:normal;left:0.00px;transform:scaleX(1.0000);transform-origin:0 0;"></div>
<div class="t" style="top:379.45px;font-size:7.5px;color:#f0f0f0;font-weight:normal;left:785.64px;"><span id="t242" style="display:inline-block;transform:scaleX(1.0000) translateX(-50%);transform-origin:0 0">CMJ</span></div>
<div class="t" style="top:379.45px;font-size:7.5px;color:#f0f0f0;font-weight:normal;left:811.64px;"><span id="t243" style="display:inline-block;transform:scaleX(1.0000) translateX(-50%);transform-origin:0 0">NON</span></div>
<div class="t" style="top:389.05px;font-size:7.5px;color:#f0f0f0;font-weight:normal;left:812.04px;"><span id="t244" style="display:inline-block;transform:scaleX(1.0000) translateX(-50%);transform-origin:0 0">CMJ</span></div>
<div class="t k" style="top:407.60px;font-size:7.8px;color:#f2f2f2;font-weight:normal;left:798.17px;"><span id="t245" style="display:inline-block;transform:scaleX(1.0000) translateX(-50%);transform-origin:0 0">Athlete 5</span></div>
<div class="a" style="left:771.74px;top:372.00px;width:1.00px;height:43.60px;background:#7a7a7a;"></div>
<div class="a" style="left:830.00px;top:224.03px;width:15.00px;height:147.87px;background:#00b0f0;"></div>
<div class="t k" style="top:231.02px;font-size:8.4px;color:#fff;font-weight:normal;left:837.50px;"><span id="t246" style="display:inline-block;transform:scaleX(1.0000) translateX(-50%);transform-origin:0 0">54</span></div>
<div class="a" style="left:855.70px;top:251.41px;width:15.00px;height:120.49px;background:#00b050;"></div>
<div class="t k" style="top:258.40px;font-size:8.4px;color:#fff;font-weight:normal;left:863.20px;"><span id="t247" style="display:inline-block;transform:scaleX(1.0000) translateX(-50%);transform-origin:0 0">44</span></div>
<div class="t" id="t248" style="top:823.25px;font-size:1px;color:#444;font-weight:normal;left:0.00px;transform:scaleX(1.0000);transform-origin:0 0;"></div>
<div class="t" style="top:379.45px;font-size:7.5px;color:#f0f0f0;font-weight:normal;left:837.50px;"><span id="t249" style="display:inline-block;transform:scaleX(1.0000) translateX(-50%);transform-origin:0 0">CMJ</span></div>
<div class="t" style="top:379.45px;font-size:7.5px;color:#f0f0f0;font-weight:normal;left:863.50px;"><span id="t250" style="display:inline-block;transform:scaleX(1.0000) translateX(-50%);transform-origin:0 0">NON</span></div>
<div class="t" style="top:389.05px;font-size:7.5px;color:#f0f0f0;font-weight:normal;left:863.90px;"><span id="t251" style="display:inline-block;transform:scaleX(1.0000) translateX(-50%);transform-origin:0 0">CMJ</span></div>
<div class="t k" style="top:407.60px;font-size:7.8px;color:#f2f2f2;font-weight:normal;left:850.03px;"><span id="t252" style="display:inline-block;transform:scaleX(1.0000) translateX(-50%);transform-origin:0 0">Athlete 6</span></div>
<div class="a" style="left:823.60px;top:372.00px;width:1.00px;height:43.60px;background:#7a7a7a;"></div>
<div class="a" style="left:881.86px;top:273.32px;width:15.00px;height:98.58px;background:#00b0f0;"></div>
<div class="t k" style="top:280.31px;font-size:8.4px;color:#fff;font-weight:normal;left:889.36px;"><span id="t253" style="display:inline-block;transform:scaleX(1.0000) translateX(-50%);transform-origin:0 0">36</span></div>
<div class="a" style="left:907.56px;top:221.29px;width:15.00px;height:150.61px;background:#00b050;"></div>
<div class="t k" style="top:228.28px;font-size:8.4px;color:#fff;font-weight:normal;left:915.06px;"><span id="t254" style="display:inline-block;transform:scaleX(1.0000) translateX(-50%);transform-origin:0 0">55</span></div>
<div class="t" id="t255" style="top:875.11px;font-size:1px;color:#444;font-weight:normal;left:0.00px;transform:scaleX(1.0000);transform-origin:0 0;"></div>
<div class="t" style="top:379.45px;font-size:7.5px;color:#f0f0f0;font-weight:normal;left:889.36px;"><span id="t256" style="display:inline-block;transform:scaleX(1.0000) translateX(-50%);transform-origin:0 0">CMJ</span></div>
<div class="t" style="top:379.45px;font-size:7.5px;color:#f0f0f0;font-weight:normal;left:915.36px;"><span id="t257" style="display:inline-block;transform:scaleX(1.0000) translateX(-50%);transform-origin:0 0">NON</span></div>
<div class="t" style="top:389.05px;font-size:7.5px;color:#f0f0f0;font-weight:normal;left:915.76px;"><span id="t258" style="display:inline-block;transform:scaleX(1.0000) translateX(-50%);transform-origin:0 0">CMJ</span></div>
<div class="t k" style="top:407.60px;font-size:7.8px;color:#f2f2f2;font-weight:normal;left:901.89px;"><span id="t259" style="display:inline-block;transform:scaleX(1.0000) translateX(-50%);transform-origin:0 0">Athlete 7</span></div>
<div class="a" style="left:875.46px;top:372.00px;width:1.00px;height:43.60px;background:#7a7a7a;"></div>
<div class="a" style="left:933.72px;top:229.51px;width:15.00px;height:142.39px;background:#00b0f0;"></div>
<div class="t k" style="top:236.50px;font-size:8.4px;color:#fff;font-weight:normal;left:941.22px;"><span id="t260" style="display:inline-block;transform:scaleX(1.0000) translateX(-50%);transform-origin:0 0">52</span></div>
<div class="a" style="left:959.42px;top:240.46px;width:15.00px;height:131.44px;background:#00b050;"></div>
<div class="t k" style="top:247.45px;font-size:8.4px;color:#fff;font-weight:normal;left:966.92px;"><span id="t261" style="display:inline-block;transform:scaleX(1.0000) translateX(-50%);transform-origin:0 0">48</span></div>
<div class="t" id="t262" style="top:926.97px;font-size:1px;color:#444;font-weight:normal;left:0.00px;transform:scaleX(1.0000);transform-origin:0 0;"></div>
<div class="t" style="top:379.45px;font-size:7.5px;color:#f0f0f0;font-weight:normal;left:941.22px;"><span id="t263" style="display:inline-block;transform:scaleX(1.0000) translateX(-50%);transform-origin:0 0">CMJ</span></div>
<div class="t" style="top:379.45px;font-size:7.5px;color:#f0f0f0;font-weight:normal;left:967.22px;"><span id="t264" style="display:inline-block;transform:scaleX(1.0000) translateX(-50%);transform-origin:0 0">NON</span></div>
<div class="t" style="top:389.05px;font-size:7.5px;color:#f0f0f0;font-weight:normal;left:967.62px;"><span id="t265" style="display:inline-block;transform:scaleX(1.0000) translateX(-50%);transform-origin:0 0">CMJ</span></div>
<div class="t k" style="top:407.60px;font-size:7.8px;color:#f2f2f2;font-weight:normal;left:953.75px;"><span id="t266" style="display:inline-block;transform:scaleX(1.0000) translateX(-50%);transform-origin:0 0">Athlete 8</span></div>
<div class="a" style="left:927.32px;top:372.00px;width:1.00px;height:43.60px;background:#7a7a7a;"></div>
<div class="a" style="left:979.18px;top:372.00px;width:1.00px;height:43.60px;background:#7a7a7a;"></div>
<div class="a" style="left:298.9px;top:488.9px;width:49.2px;height:14px;border:1.1px solid #217346;border-bottom-width:1.6px"></div>
<div class="a" style="left:344.00px;top:498.80px;width:6.00px;height:6.00px;background:#fff;"></div>
<div class="a" style="left:345.00px;top:499.80px;width:4.00px;height:4.00px;background:#217346;"></div>
<div class="a" style="left:1010.20px;top:154.20px;width:14.00px;height:383.00px;background:#fff;border:1px solid #bdbdbd;border-right:none"></div>
<div class="a" style="left:1010.20px;top:164.80px;width:14.00px;height:1.00px;background:#bdbdbd;"></div>
<div class="a" style="left:1010.20px;top:526.50px;width:14.00px;height:1.00px;background:#bdbdbd;"></div>
<div class="a" style="left:1011.20px;top:513.50px;width:13.00px;height:13.00px;background:#e9e9e9;"></div>
<svg style="left:1013px;top:157.5px" width="8" height="5" viewBox="0 0 8 5"><path d="M1.5 3.5 L4 1 L6.5 3.5Z" fill="#666"/></svg>
<svg style="left:1013px;top:529px" width="8" height="5" viewBox="0 0 8 5"><path d="M1 1 L4 4 L7 1Z" fill="#777"/></svg>
<div class="a" style="left:0.00px;top:537.20px;width:1024.00px;height:20.50px;background:#f0f0f0;"></div>
<div class="a" style="left:0.00px;top:537.20px;width:1009.00px;height:1.00px;background:#c6c6c6;"></div>
<svg style="left:20px;top:544px" width="30" height="7" viewBox="0 0 30 7"><path d="M4 0.5 L1 3.5 L4 6.5Z" fill="#bbb"/><path d="M24 0.5 L27 3.5 L24 6.5Z" fill="#bbb"/></svg>
<div class="a" style="left:74.50px;top:537.00px;width:56.00px;height:18.50px;background:#fff;border-left:1px solid #c6c6c6;border-right:1px solid #c6c6c6"></div>
<div class="a" style="left:75.00px;top:554.60px;width:55.00px;height:1.10px;background:#217346;"></div>
<div class="t" id="t267" style="top:543.63px;font-size:9.3px;color:#217346;font-weight:bold;left:83.50px;transform:scaleX(1.0502);transform-origin:0 0;">Testing</div>
<div class="t" id="t268" style="top:543.63px;font-size:9.3px;color:#2b2b2b;font-weight:normal;left:140.00px;transform:scaleX(0.9502);transform-origin:0 0;">Sheet1</div>
<div class="a" style="left:178.50px;top:540.00px;width:1.00px;height:14.00px;background:#c6c6c6;"></div>
<svg style="left:202.5px;top:541.5px" width="12" height="12" viewBox="0 0 12 12"><circle cx="6" cy="6" r="5" fill="none" stroke="#666" stroke-width="1"/><path d="M6 3 V9 M3 6 H9" stroke="#666" stroke-width="1"/></svg>
<div class="a" style="left:613.50px;top:543.00px;width:1.00px;height:1.20px;background:#999;"></div>
<div class="a" style="left:613.50px;top:546.00px;width:1.00px;height:1.20px;background:#999;"></div>
<div class="a" style="left:613.50px;top:549.00px;width:1.00px;height:1.20px;background:#999;"></div>
<div class="a" style="left:626.20px;top:542.80px;width:381.50px;height:11.00px;background:#fff;border:1px solid #c6c6c6;border-top-color:#e3e3e3"></div>
<div class="a" style="left:925.00px;top:543.80px;width:72.00px;height:9.00px;background:#e9e9e9;"></div>
<div class="a" style="left:637.00px;top:543.00px;width:1.00px;height:10.50px;background:#c6c6c6;"></div>
<div class="a" style="left:997.00px;top:543.00px;width:1.00px;height:10.50px;background:#c6c6c6;"></div>
<svg style="left:629.5px;top:545px" width="6" height="6" viewBox="0 0 6 6"><path d="M4 0.5 L1.5 3 L4 5.5Z" fill="#777"/></svg>
<svg style="left:999.5px;top:545px" width="6" height="6" viewBox="0 0 6 6"><path d="M2 0.5 L4.5 3 L2 5.5Z" fill="#777"/></svg>
<div class="a" style="left:0.00px;top:557.70px;width:1024.00px;height:15.80px;background:#217346;"></div>
<div class="a" style="left:0.00px;top:573.50px;width:1024.00px;height:2.50px;background:#0f2a44;"></div>
<div class="a" style="left:140.00px;top:573.50px;width:25.00px;height:2.50px;background:#2a5a9a;"></div>
<div class="t" id="t269" style="top:561.72px;font-size:8.6px;color:#fff;font-weight:normal;left:4.50px;transform:scaleX(0.9258);transform-origin:0 0;">Ready</div>
<svg style="left:43px;top:561px" width="12" height="10" viewBox="0 0 12 10"><rect x="3" y="3" width="8" height="6" fill="none" stroke="#fff" stroke-width="1"/><circle cx="2.5" cy="2.5" r="2" fill="#fff"/><path d="M5 6H9M5 8H9" stroke="#fff" stroke-width="0.8"/></svg>
<div class="a" style="left:806.00px;top:557.70px;width:26.00px;height:15.80px;background:#1a5c37;"></div>
<svg style="left:813px;top:560px" width="12" height="11" viewBox="0 0 12 11"><path d="M1 1.5H11M1 4H11M1 6.5H11M1 9H11" stroke="#fff" stroke-width="1"/></svg>
<svg style="left:841px;top:560px" width="12" height="11" viewBox="0 0 12 11"><rect x="1" y="1" width="10" height="9" fill="none" stroke="#fff" stroke-width="1"/><path d="M3.5 3V8M3.5 3H8M3.5 5.5H7M3.5 8H8" stroke="#fff" stroke-width="0.9"/></svg>
<svg style="left:869px;top:560px" width="12" height="11" viewBox="0 0 12 11"><rect x="1" y="1" width="10" height="9" fill="none" stroke="#fff" stroke-width="1"/><rect x="1" y="1" width="6" height="5" fill="#fff"/></svg>
<div class="a" style="left:894.00px;top:565.00px;width:3.50px;height:1.00px;background:#fff;"></div>
<div class="a" style="left:900.00px;top:565.00px;width:75.00px;height:1.00px;background:#fff;"></div>
<div class="a" style="left:930.00px;top:561.50px;width:2.50px;height:7.00px;background:#fff;"></div>
<div class="a" style="left:937.00px;top:563.50px;width:1.00px;height:3.00px;background:#fff;"></div>
<div class="a" style="left:981.00px;top:565.00px;width:5.00px;height:1.00px;background:#fff;"></div>
<div class="a" style="left:983.00px;top:563.00px;width:1.00px;height:5.00px;background:#fff;"></div>
<div class="t" id="t270" style="top:562.23px;font-size:8px;color:#fff;font-weight:bold;left:997.50px;transform:scaleX(0.9054);transform-origin:0 0;">60%</div>
</body></html>
